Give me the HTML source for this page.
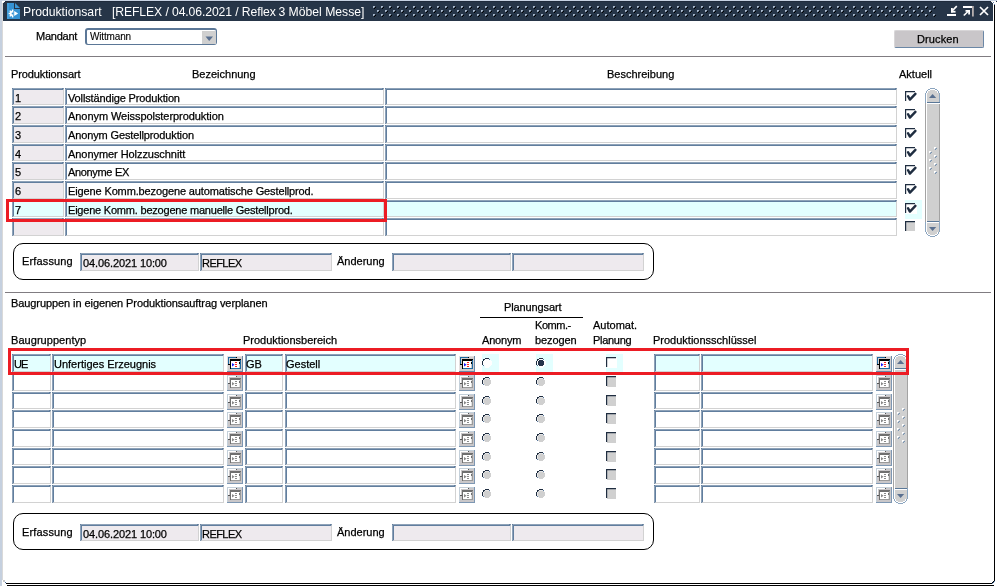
<!DOCTYPE html>
<html><head><meta charset="utf-8"><style>
html,body{margin:0;padding:0;}
body{width:997px;height:586px;position:relative;overflow:hidden;background:#fff;font-family:"Liberation Sans", sans-serif;}
.r{position:absolute;display:block;}
.t{position:absolute;white-space:pre;line-height:13px;font-family:"Liberation Sans", sans-serif;will-change:transform;-webkit-text-stroke:0.25px currentColor;}
.f{position:absolute;box-sizing:border-box;border-top:2px solid #617e9e;border-left:2px solid #617e9e;border-right:1px solid #d2d2d2;border-bottom:1px solid #d2d2d2;}.f::before{content:'';position:absolute;top:-2px;left:-1px;right:1px;height:1px;background:#8ea2b8;}.f::after{content:'';position:absolute;top:-1px;left:-2px;bottom:0;width:1px;background:#8ea2b8;}
.cb{position:absolute;box-sizing:border-box;border:2px solid #5b7797;border-right-width:1px;border-bottom-width:1px;border-radius:3px;background:#fff;}
.btn{position:absolute;box-sizing:border-box;background:#c9c6c9;border-top:1px solid #d8d6d8;border-left:1px solid #d8d6d8;border-right:1px solid #6b87a6;border-bottom:1px solid #6b87a6;border-radius:2px;}
.rb{position:absolute;box-sizing:border-box;border:1px solid #000;border-radius:10px;}
.hl{position:absolute;box-sizing:border-box;border:3px solid #ec1c24;}
</style></head><body>
<div class="r" style="left:0px;top:0px;width:997px;height:1px;background:#c8d3e3"></div>
<div class="r" style="left:0px;top:0px;width:2px;height:586px;background:#c5d0df"></div>
<div class="r" style="left:2px;top:3px;width:1px;height:577px;background:#d9d9d9"></div>
<div class="r" style="left:3px;top:1px;width:990px;height:20px;background:#263548"></div>
<div class="r" style="left:2px;top:1px;width:1px;height:2px;background:#ffffff"></div>
<div class="r" style="left:3px;top:1px;width:2px;height:1px;background:#ffffff"></div>
<div class="r" style="left:3px;top:2px;width:1px;height:1px;background:#e8e8e8"></div>
<div class="r" style="left:5px;top:1px;width:986px;height:1px;background:#1f2b3c"></div>
<div class="r" style="left:991px;top:1px;width:2px;height:1px;background:#f0f0f0"></div>
<div class="r" style="left:992px;top:2px;width:1px;height:1px;background:#ffffff"></div>
<div class="r" style="left:993px;top:2px;width:1px;height:1px;background:#5f7fa8"></div>
<div class="r" style="left:996px;top:1px;width:1px;height:1px;background:#1f2b3c"></div>
<div class="r" style="left:994px;top:5px;width:1px;height:576px;background:#000"></div>
<div class="r" style="left:994px;top:4px;width:1px;height:1px;background:#6688b0"></div>
<div class="r" style="left:6px;top:583px;width:986px;height:1px;background:#000"></div>
<div class="r" style="left:993px;top:581px;width:1px;height:1px;background:#000"></div>
<div class="r" style="left:992px;top:582px;width:1px;height:1px;background:#000"></div>
<div class="r" style="left:994px;top:581px;width:1px;height:1px;background:#6f93bf"></div>
<div class="r" style="left:992px;top:583px;width:1px;height:1px;background:#6f93bf"></div>
<div class="r" style="left:993px;top:582px;width:1px;height:1px;background:#3a5a80"></div>
<div class="r" style="left:7px;top:585px;width:987px;height:1px;background:#000"></div>
<div class="r" style="left:5px;top:582px;width:1px;height:1px;background:#3f6aa0"></div>
<div class="r" style="left:3px;top:580px;width:2px;height:2px;background:#c8c8c8"></div>
<svg class="r" style="left:7px;top:3px" width="13" height="16" viewBox="0 0 13 16">
<path d="M0 0H7V6H13V16H0Z" fill="#3592d3"/>
<rect x="0" y="0" width="2" height="16" fill="#43a0de"/>
<path d="M8 0L13 5H8Z" fill="#3b97d6"/>
<path d="M6.3 7.7H5.6A2.8 2.8 0 0 0 5.6 13.3H6.3Z" fill="#fff"/>
<rect x="4.85" y="6.55" width="1.5" height="1.5" fill="#fff"/><rect x="2.59" y="7.49" width="1.5" height="1.5" fill="#fff"/><rect x="1.65" y="9.75" width="1.5" height="1.5" fill="#fff"/><rect x="2.59" y="12.01" width="1.5" height="1.5" fill="#fff"/><rect x="4.85" y="12.95" width="1.5" height="1.5" fill="#fff"/>
<circle cx="5.5" cy="10.5" r="0.9" fill="#3592d3"/>
<path d="M7.2 8L11.2 10.5L7.2 13Z" fill="#fff"/>
</svg>
<div class="t" style="left:23px;top:6px;font-size:12.2px;color:#fff;-webkit-text-stroke:0;">Produktionsart</div>
<div class="t" style="left:112px;top:6px;font-size:12.2px;color:#fff;-webkit-text-stroke:0;letter-spacing:-0.1px">[REFLEX / 04.06.2021 / Reflex</div>
<div class="t" style="left:275px;top:6px;font-size:12.2px;color:#fff;-webkit-text-stroke:0;"> 3 Möbel Messe]</div>
<svg class="r" style="left:0;top:0" width="997" height="22" viewBox="0 0 997 22" shape-rendering="crispEdges"><path d="M373 6h2v1h-1v1h-1z M373 14h2v1h-1v1h-1z M377 10h2v1h-1v1h-1z M381 6h2v1h-1v1h-1z M381 14h2v1h-1v1h-1z M385 10h2v1h-1v1h-1z M389 6h2v1h-1v1h-1z M389 14h2v1h-1v1h-1z M393 10h2v1h-1v1h-1z M397 6h2v1h-1v1h-1z M397 14h2v1h-1v1h-1z M401 10h2v1h-1v1h-1z M405 6h2v1h-1v1h-1z M405 14h2v1h-1v1h-1z M409 10h2v1h-1v1h-1z M413 6h2v1h-1v1h-1z M413 14h2v1h-1v1h-1z M417 10h2v1h-1v1h-1z M421 6h2v1h-1v1h-1z M421 14h2v1h-1v1h-1z M425 10h2v1h-1v1h-1z M429 6h2v1h-1v1h-1z M429 14h2v1h-1v1h-1z M433 10h2v1h-1v1h-1z M437 6h2v1h-1v1h-1z M437 14h2v1h-1v1h-1z M441 10h2v1h-1v1h-1z M445 6h2v1h-1v1h-1z M445 14h2v1h-1v1h-1z M449 10h2v1h-1v1h-1z M453 6h2v1h-1v1h-1z M453 14h2v1h-1v1h-1z M457 10h2v1h-1v1h-1z M461 6h2v1h-1v1h-1z M461 14h2v1h-1v1h-1z M465 10h2v1h-1v1h-1z M469 6h2v1h-1v1h-1z M469 14h2v1h-1v1h-1z M473 10h2v1h-1v1h-1z M477 6h2v1h-1v1h-1z M477 14h2v1h-1v1h-1z M481 10h2v1h-1v1h-1z M485 6h2v1h-1v1h-1z M485 14h2v1h-1v1h-1z M489 10h2v1h-1v1h-1z M493 6h2v1h-1v1h-1z M493 14h2v1h-1v1h-1z M497 10h2v1h-1v1h-1z M501 6h2v1h-1v1h-1z M501 14h2v1h-1v1h-1z M505 10h2v1h-1v1h-1z M509 6h2v1h-1v1h-1z M509 14h2v1h-1v1h-1z M513 10h2v1h-1v1h-1z M517 6h2v1h-1v1h-1z M517 14h2v1h-1v1h-1z M521 10h2v1h-1v1h-1z M525 6h2v1h-1v1h-1z M525 14h2v1h-1v1h-1z M529 10h2v1h-1v1h-1z M533 6h2v1h-1v1h-1z M533 14h2v1h-1v1h-1z M537 10h2v1h-1v1h-1z M541 6h2v1h-1v1h-1z M541 14h2v1h-1v1h-1z M545 10h2v1h-1v1h-1z M549 6h2v1h-1v1h-1z M549 14h2v1h-1v1h-1z M553 10h2v1h-1v1h-1z M557 6h2v1h-1v1h-1z M557 14h2v1h-1v1h-1z M561 10h2v1h-1v1h-1z M565 6h2v1h-1v1h-1z M565 14h2v1h-1v1h-1z M569 10h2v1h-1v1h-1z M573 6h2v1h-1v1h-1z M573 14h2v1h-1v1h-1z M577 10h2v1h-1v1h-1z M581 6h2v1h-1v1h-1z M581 14h2v1h-1v1h-1z M585 10h2v1h-1v1h-1z M589 6h2v1h-1v1h-1z M589 14h2v1h-1v1h-1z M593 10h2v1h-1v1h-1z M597 6h2v1h-1v1h-1z M597 14h2v1h-1v1h-1z M601 10h2v1h-1v1h-1z M605 6h2v1h-1v1h-1z M605 14h2v1h-1v1h-1z M609 10h2v1h-1v1h-1z M613 6h2v1h-1v1h-1z M613 14h2v1h-1v1h-1z M617 10h2v1h-1v1h-1z M621 6h2v1h-1v1h-1z M621 14h2v1h-1v1h-1z M625 10h2v1h-1v1h-1z M629 6h2v1h-1v1h-1z M629 14h2v1h-1v1h-1z M633 10h2v1h-1v1h-1z M637 6h2v1h-1v1h-1z M637 14h2v1h-1v1h-1z M641 10h2v1h-1v1h-1z M645 6h2v1h-1v1h-1z M645 14h2v1h-1v1h-1z M649 10h2v1h-1v1h-1z M653 6h2v1h-1v1h-1z M653 14h2v1h-1v1h-1z M657 10h2v1h-1v1h-1z M661 6h2v1h-1v1h-1z M661 14h2v1h-1v1h-1z M665 10h2v1h-1v1h-1z M669 6h2v1h-1v1h-1z M669 14h2v1h-1v1h-1z M673 10h2v1h-1v1h-1z M677 6h2v1h-1v1h-1z M677 14h2v1h-1v1h-1z M681 10h2v1h-1v1h-1z M685 6h2v1h-1v1h-1z M685 14h2v1h-1v1h-1z M689 10h2v1h-1v1h-1z M693 6h2v1h-1v1h-1z M693 14h2v1h-1v1h-1z M697 10h2v1h-1v1h-1z M701 6h2v1h-1v1h-1z M701 14h2v1h-1v1h-1z M705 10h2v1h-1v1h-1z M709 6h2v1h-1v1h-1z M709 14h2v1h-1v1h-1z M713 10h2v1h-1v1h-1z M717 6h2v1h-1v1h-1z M717 14h2v1h-1v1h-1z M721 10h2v1h-1v1h-1z M725 6h2v1h-1v1h-1z M725 14h2v1h-1v1h-1z M729 10h2v1h-1v1h-1z M733 6h2v1h-1v1h-1z M733 14h2v1h-1v1h-1z M737 10h2v1h-1v1h-1z M741 6h2v1h-1v1h-1z M741 14h2v1h-1v1h-1z M745 10h2v1h-1v1h-1z M749 6h2v1h-1v1h-1z M749 14h2v1h-1v1h-1z M753 10h2v1h-1v1h-1z M757 6h2v1h-1v1h-1z M757 14h2v1h-1v1h-1z M761 10h2v1h-1v1h-1z M765 6h2v1h-1v1h-1z M765 14h2v1h-1v1h-1z M769 10h2v1h-1v1h-1z M773 6h2v1h-1v1h-1z M773 14h2v1h-1v1h-1z M777 10h2v1h-1v1h-1z M781 6h2v1h-1v1h-1z M781 14h2v1h-1v1h-1z M785 10h2v1h-1v1h-1z M789 6h2v1h-1v1h-1z M789 14h2v1h-1v1h-1z M793 10h2v1h-1v1h-1z M797 6h2v1h-1v1h-1z M797 14h2v1h-1v1h-1z M801 10h2v1h-1v1h-1z M805 6h2v1h-1v1h-1z M805 14h2v1h-1v1h-1z M809 10h2v1h-1v1h-1z M813 6h2v1h-1v1h-1z M813 14h2v1h-1v1h-1z M817 10h2v1h-1v1h-1z M821 6h2v1h-1v1h-1z M821 14h2v1h-1v1h-1z M825 10h2v1h-1v1h-1z M829 6h2v1h-1v1h-1z M829 14h2v1h-1v1h-1z M833 10h2v1h-1v1h-1z M837 6h2v1h-1v1h-1z M837 14h2v1h-1v1h-1z M841 10h2v1h-1v1h-1z M845 6h2v1h-1v1h-1z M845 14h2v1h-1v1h-1z M849 10h2v1h-1v1h-1z M853 6h2v1h-1v1h-1z M853 14h2v1h-1v1h-1z M857 10h2v1h-1v1h-1z M861 6h2v1h-1v1h-1z M861 14h2v1h-1v1h-1z M865 10h2v1h-1v1h-1z M869 6h2v1h-1v1h-1z M869 14h2v1h-1v1h-1z M873 10h2v1h-1v1h-1z M877 6h2v1h-1v1h-1z M877 14h2v1h-1v1h-1z M881 10h2v1h-1v1h-1z M885 6h2v1h-1v1h-1z M885 14h2v1h-1v1h-1z M889 10h2v1h-1v1h-1z M893 6h2v1h-1v1h-1z M893 14h2v1h-1v1h-1z M897 10h2v1h-1v1h-1z M901 6h2v1h-1v1h-1z M901 14h2v1h-1v1h-1z M905 10h2v1h-1v1h-1z M909 6h2v1h-1v1h-1z M909 14h2v1h-1v1h-1z M913 10h2v1h-1v1h-1z M917 6h2v1h-1v1h-1z M917 14h2v1h-1v1h-1z M921 10h2v1h-1v1h-1z M925 6h2v1h-1v1h-1z M925 14h2v1h-1v1h-1z M929 10h2v1h-1v1h-1z M933 6h2v1h-1v1h-1z M933 14h2v1h-1v1h-1z" fill="#a9b8cb"/><path d="M374 7h1v1h-1z M374 15h1v1h-1z M378 11h1v1h-1z M382 7h1v1h-1z M382 15h1v1h-1z M386 11h1v1h-1z M390 7h1v1h-1z M390 15h1v1h-1z M394 11h1v1h-1z M398 7h1v1h-1z M398 15h1v1h-1z M402 11h1v1h-1z M406 7h1v1h-1z M406 15h1v1h-1z M410 11h1v1h-1z M414 7h1v1h-1z M414 15h1v1h-1z M418 11h1v1h-1z M422 7h1v1h-1z M422 15h1v1h-1z M426 11h1v1h-1z M430 7h1v1h-1z M430 15h1v1h-1z M434 11h1v1h-1z M438 7h1v1h-1z M438 15h1v1h-1z M442 11h1v1h-1z M446 7h1v1h-1z M446 15h1v1h-1z M450 11h1v1h-1z M454 7h1v1h-1z M454 15h1v1h-1z M458 11h1v1h-1z M462 7h1v1h-1z M462 15h1v1h-1z M466 11h1v1h-1z M470 7h1v1h-1z M470 15h1v1h-1z M474 11h1v1h-1z M478 7h1v1h-1z M478 15h1v1h-1z M482 11h1v1h-1z M486 7h1v1h-1z M486 15h1v1h-1z M490 11h1v1h-1z M494 7h1v1h-1z M494 15h1v1h-1z M498 11h1v1h-1z M502 7h1v1h-1z M502 15h1v1h-1z M506 11h1v1h-1z M510 7h1v1h-1z M510 15h1v1h-1z M514 11h1v1h-1z M518 7h1v1h-1z M518 15h1v1h-1z M522 11h1v1h-1z M526 7h1v1h-1z M526 15h1v1h-1z M530 11h1v1h-1z M534 7h1v1h-1z M534 15h1v1h-1z M538 11h1v1h-1z M542 7h1v1h-1z M542 15h1v1h-1z M546 11h1v1h-1z M550 7h1v1h-1z M550 15h1v1h-1z M554 11h1v1h-1z M558 7h1v1h-1z M558 15h1v1h-1z M562 11h1v1h-1z M566 7h1v1h-1z M566 15h1v1h-1z M570 11h1v1h-1z M574 7h1v1h-1z M574 15h1v1h-1z M578 11h1v1h-1z M582 7h1v1h-1z M582 15h1v1h-1z M586 11h1v1h-1z M590 7h1v1h-1z M590 15h1v1h-1z M594 11h1v1h-1z M598 7h1v1h-1z M598 15h1v1h-1z M602 11h1v1h-1z M606 7h1v1h-1z M606 15h1v1h-1z M610 11h1v1h-1z M614 7h1v1h-1z M614 15h1v1h-1z M618 11h1v1h-1z M622 7h1v1h-1z M622 15h1v1h-1z M626 11h1v1h-1z M630 7h1v1h-1z M630 15h1v1h-1z M634 11h1v1h-1z M638 7h1v1h-1z M638 15h1v1h-1z M642 11h1v1h-1z M646 7h1v1h-1z M646 15h1v1h-1z M650 11h1v1h-1z M654 7h1v1h-1z M654 15h1v1h-1z M658 11h1v1h-1z M662 7h1v1h-1z M662 15h1v1h-1z M666 11h1v1h-1z M670 7h1v1h-1z M670 15h1v1h-1z M674 11h1v1h-1z M678 7h1v1h-1z M678 15h1v1h-1z M682 11h1v1h-1z M686 7h1v1h-1z M686 15h1v1h-1z M690 11h1v1h-1z M694 7h1v1h-1z M694 15h1v1h-1z M698 11h1v1h-1z M702 7h1v1h-1z M702 15h1v1h-1z M706 11h1v1h-1z M710 7h1v1h-1z M710 15h1v1h-1z M714 11h1v1h-1z M718 7h1v1h-1z M718 15h1v1h-1z M722 11h1v1h-1z M726 7h1v1h-1z M726 15h1v1h-1z M730 11h1v1h-1z M734 7h1v1h-1z M734 15h1v1h-1z M738 11h1v1h-1z M742 7h1v1h-1z M742 15h1v1h-1z M746 11h1v1h-1z M750 7h1v1h-1z M750 15h1v1h-1z M754 11h1v1h-1z M758 7h1v1h-1z M758 15h1v1h-1z M762 11h1v1h-1z M766 7h1v1h-1z M766 15h1v1h-1z M770 11h1v1h-1z M774 7h1v1h-1z M774 15h1v1h-1z M778 11h1v1h-1z M782 7h1v1h-1z M782 15h1v1h-1z M786 11h1v1h-1z M790 7h1v1h-1z M790 15h1v1h-1z M794 11h1v1h-1z M798 7h1v1h-1z M798 15h1v1h-1z M802 11h1v1h-1z M806 7h1v1h-1z M806 15h1v1h-1z M810 11h1v1h-1z M814 7h1v1h-1z M814 15h1v1h-1z M818 11h1v1h-1z M822 7h1v1h-1z M822 15h1v1h-1z M826 11h1v1h-1z M830 7h1v1h-1z M830 15h1v1h-1z M834 11h1v1h-1z M838 7h1v1h-1z M838 15h1v1h-1z M842 11h1v1h-1z M846 7h1v1h-1z M846 15h1v1h-1z M850 11h1v1h-1z M854 7h1v1h-1z M854 15h1v1h-1z M858 11h1v1h-1z M862 7h1v1h-1z M862 15h1v1h-1z M866 11h1v1h-1z M870 7h1v1h-1z M870 15h1v1h-1z M874 11h1v1h-1z M878 7h1v1h-1z M878 15h1v1h-1z M882 11h1v1h-1z M886 7h1v1h-1z M886 15h1v1h-1z M890 11h1v1h-1z M894 7h1v1h-1z M894 15h1v1h-1z M898 11h1v1h-1z M902 7h1v1h-1z M902 15h1v1h-1z M906 11h1v1h-1z M910 7h1v1h-1z M910 15h1v1h-1z M914 11h1v1h-1z M918 7h1v1h-1z M918 15h1v1h-1z M922 11h1v1h-1z M926 7h1v1h-1z M926 15h1v1h-1z M930 11h1v1h-1z M934 7h1v1h-1z M934 15h1v1h-1z" fill="#4a5a70"/><path d="M375 7h1v1h-1z M374 8h1v1h-1z M375 15h1v1h-1z M374 16h1v1h-1z M379 11h1v1h-1z M378 12h1v1h-1z M383 7h1v1h-1z M382 8h1v1h-1z M383 15h1v1h-1z M382 16h1v1h-1z M387 11h1v1h-1z M386 12h1v1h-1z M391 7h1v1h-1z M390 8h1v1h-1z M391 15h1v1h-1z M390 16h1v1h-1z M395 11h1v1h-1z M394 12h1v1h-1z M399 7h1v1h-1z M398 8h1v1h-1z M399 15h1v1h-1z M398 16h1v1h-1z M403 11h1v1h-1z M402 12h1v1h-1z M407 7h1v1h-1z M406 8h1v1h-1z M407 15h1v1h-1z M406 16h1v1h-1z M411 11h1v1h-1z M410 12h1v1h-1z M415 7h1v1h-1z M414 8h1v1h-1z M415 15h1v1h-1z M414 16h1v1h-1z M419 11h1v1h-1z M418 12h1v1h-1z M423 7h1v1h-1z M422 8h1v1h-1z M423 15h1v1h-1z M422 16h1v1h-1z M427 11h1v1h-1z M426 12h1v1h-1z M431 7h1v1h-1z M430 8h1v1h-1z M431 15h1v1h-1z M430 16h1v1h-1z M435 11h1v1h-1z M434 12h1v1h-1z M439 7h1v1h-1z M438 8h1v1h-1z M439 15h1v1h-1z M438 16h1v1h-1z M443 11h1v1h-1z M442 12h1v1h-1z M447 7h1v1h-1z M446 8h1v1h-1z M447 15h1v1h-1z M446 16h1v1h-1z M451 11h1v1h-1z M450 12h1v1h-1z M455 7h1v1h-1z M454 8h1v1h-1z M455 15h1v1h-1z M454 16h1v1h-1z M459 11h1v1h-1z M458 12h1v1h-1z M463 7h1v1h-1z M462 8h1v1h-1z M463 15h1v1h-1z M462 16h1v1h-1z M467 11h1v1h-1z M466 12h1v1h-1z M471 7h1v1h-1z M470 8h1v1h-1z M471 15h1v1h-1z M470 16h1v1h-1z M475 11h1v1h-1z M474 12h1v1h-1z M479 7h1v1h-1z M478 8h1v1h-1z M479 15h1v1h-1z M478 16h1v1h-1z M483 11h1v1h-1z M482 12h1v1h-1z M487 7h1v1h-1z M486 8h1v1h-1z M487 15h1v1h-1z M486 16h1v1h-1z M491 11h1v1h-1z M490 12h1v1h-1z M495 7h1v1h-1z M494 8h1v1h-1z M495 15h1v1h-1z M494 16h1v1h-1z M499 11h1v1h-1z M498 12h1v1h-1z M503 7h1v1h-1z M502 8h1v1h-1z M503 15h1v1h-1z M502 16h1v1h-1z M507 11h1v1h-1z M506 12h1v1h-1z M511 7h1v1h-1z M510 8h1v1h-1z M511 15h1v1h-1z M510 16h1v1h-1z M515 11h1v1h-1z M514 12h1v1h-1z M519 7h1v1h-1z M518 8h1v1h-1z M519 15h1v1h-1z M518 16h1v1h-1z M523 11h1v1h-1z M522 12h1v1h-1z M527 7h1v1h-1z M526 8h1v1h-1z M527 15h1v1h-1z M526 16h1v1h-1z M531 11h1v1h-1z M530 12h1v1h-1z M535 7h1v1h-1z M534 8h1v1h-1z M535 15h1v1h-1z M534 16h1v1h-1z M539 11h1v1h-1z M538 12h1v1h-1z M543 7h1v1h-1z M542 8h1v1h-1z M543 15h1v1h-1z M542 16h1v1h-1z M547 11h1v1h-1z M546 12h1v1h-1z M551 7h1v1h-1z M550 8h1v1h-1z M551 15h1v1h-1z M550 16h1v1h-1z M555 11h1v1h-1z M554 12h1v1h-1z M559 7h1v1h-1z M558 8h1v1h-1z M559 15h1v1h-1z M558 16h1v1h-1z M563 11h1v1h-1z M562 12h1v1h-1z M567 7h1v1h-1z M566 8h1v1h-1z M567 15h1v1h-1z M566 16h1v1h-1z M571 11h1v1h-1z M570 12h1v1h-1z M575 7h1v1h-1z M574 8h1v1h-1z M575 15h1v1h-1z M574 16h1v1h-1z M579 11h1v1h-1z M578 12h1v1h-1z M583 7h1v1h-1z M582 8h1v1h-1z M583 15h1v1h-1z M582 16h1v1h-1z M587 11h1v1h-1z M586 12h1v1h-1z M591 7h1v1h-1z M590 8h1v1h-1z M591 15h1v1h-1z M590 16h1v1h-1z M595 11h1v1h-1z M594 12h1v1h-1z M599 7h1v1h-1z M598 8h1v1h-1z M599 15h1v1h-1z M598 16h1v1h-1z M603 11h1v1h-1z M602 12h1v1h-1z M607 7h1v1h-1z M606 8h1v1h-1z M607 15h1v1h-1z M606 16h1v1h-1z M611 11h1v1h-1z M610 12h1v1h-1z M615 7h1v1h-1z M614 8h1v1h-1z M615 15h1v1h-1z M614 16h1v1h-1z M619 11h1v1h-1z M618 12h1v1h-1z M623 7h1v1h-1z M622 8h1v1h-1z M623 15h1v1h-1z M622 16h1v1h-1z M627 11h1v1h-1z M626 12h1v1h-1z M631 7h1v1h-1z M630 8h1v1h-1z M631 15h1v1h-1z M630 16h1v1h-1z M635 11h1v1h-1z M634 12h1v1h-1z M639 7h1v1h-1z M638 8h1v1h-1z M639 15h1v1h-1z M638 16h1v1h-1z M643 11h1v1h-1z M642 12h1v1h-1z M647 7h1v1h-1z M646 8h1v1h-1z M647 15h1v1h-1z M646 16h1v1h-1z M651 11h1v1h-1z M650 12h1v1h-1z M655 7h1v1h-1z M654 8h1v1h-1z M655 15h1v1h-1z M654 16h1v1h-1z M659 11h1v1h-1z M658 12h1v1h-1z M663 7h1v1h-1z M662 8h1v1h-1z M663 15h1v1h-1z M662 16h1v1h-1z M667 11h1v1h-1z M666 12h1v1h-1z M671 7h1v1h-1z M670 8h1v1h-1z M671 15h1v1h-1z M670 16h1v1h-1z M675 11h1v1h-1z M674 12h1v1h-1z M679 7h1v1h-1z M678 8h1v1h-1z M679 15h1v1h-1z M678 16h1v1h-1z M683 11h1v1h-1z M682 12h1v1h-1z M687 7h1v1h-1z M686 8h1v1h-1z M687 15h1v1h-1z M686 16h1v1h-1z M691 11h1v1h-1z M690 12h1v1h-1z M695 7h1v1h-1z M694 8h1v1h-1z M695 15h1v1h-1z M694 16h1v1h-1z M699 11h1v1h-1z M698 12h1v1h-1z M703 7h1v1h-1z M702 8h1v1h-1z M703 15h1v1h-1z M702 16h1v1h-1z M707 11h1v1h-1z M706 12h1v1h-1z M711 7h1v1h-1z M710 8h1v1h-1z M711 15h1v1h-1z M710 16h1v1h-1z M715 11h1v1h-1z M714 12h1v1h-1z M719 7h1v1h-1z M718 8h1v1h-1z M719 15h1v1h-1z M718 16h1v1h-1z M723 11h1v1h-1z M722 12h1v1h-1z M727 7h1v1h-1z M726 8h1v1h-1z M727 15h1v1h-1z M726 16h1v1h-1z M731 11h1v1h-1z M730 12h1v1h-1z M735 7h1v1h-1z M734 8h1v1h-1z M735 15h1v1h-1z M734 16h1v1h-1z M739 11h1v1h-1z M738 12h1v1h-1z M743 7h1v1h-1z M742 8h1v1h-1z M743 15h1v1h-1z M742 16h1v1h-1z M747 11h1v1h-1z M746 12h1v1h-1z M751 7h1v1h-1z M750 8h1v1h-1z M751 15h1v1h-1z M750 16h1v1h-1z M755 11h1v1h-1z M754 12h1v1h-1z M759 7h1v1h-1z M758 8h1v1h-1z M759 15h1v1h-1z M758 16h1v1h-1z M763 11h1v1h-1z M762 12h1v1h-1z M767 7h1v1h-1z M766 8h1v1h-1z M767 15h1v1h-1z M766 16h1v1h-1z M771 11h1v1h-1z M770 12h1v1h-1z M775 7h1v1h-1z M774 8h1v1h-1z M775 15h1v1h-1z M774 16h1v1h-1z M779 11h1v1h-1z M778 12h1v1h-1z M783 7h1v1h-1z M782 8h1v1h-1z M783 15h1v1h-1z M782 16h1v1h-1z M787 11h1v1h-1z M786 12h1v1h-1z M791 7h1v1h-1z M790 8h1v1h-1z M791 15h1v1h-1z M790 16h1v1h-1z M795 11h1v1h-1z M794 12h1v1h-1z M799 7h1v1h-1z M798 8h1v1h-1z M799 15h1v1h-1z M798 16h1v1h-1z M803 11h1v1h-1z M802 12h1v1h-1z M807 7h1v1h-1z M806 8h1v1h-1z M807 15h1v1h-1z M806 16h1v1h-1z M811 11h1v1h-1z M810 12h1v1h-1z M815 7h1v1h-1z M814 8h1v1h-1z M815 15h1v1h-1z M814 16h1v1h-1z M819 11h1v1h-1z M818 12h1v1h-1z M823 7h1v1h-1z M822 8h1v1h-1z M823 15h1v1h-1z M822 16h1v1h-1z M827 11h1v1h-1z M826 12h1v1h-1z M831 7h1v1h-1z M830 8h1v1h-1z M831 15h1v1h-1z M830 16h1v1h-1z M835 11h1v1h-1z M834 12h1v1h-1z M839 7h1v1h-1z M838 8h1v1h-1z M839 15h1v1h-1z M838 16h1v1h-1z M843 11h1v1h-1z M842 12h1v1h-1z M847 7h1v1h-1z M846 8h1v1h-1z M847 15h1v1h-1z M846 16h1v1h-1z M851 11h1v1h-1z M850 12h1v1h-1z M855 7h1v1h-1z M854 8h1v1h-1z M855 15h1v1h-1z M854 16h1v1h-1z M859 11h1v1h-1z M858 12h1v1h-1z M863 7h1v1h-1z M862 8h1v1h-1z M863 15h1v1h-1z M862 16h1v1h-1z M867 11h1v1h-1z M866 12h1v1h-1z M871 7h1v1h-1z M870 8h1v1h-1z M871 15h1v1h-1z M870 16h1v1h-1z M875 11h1v1h-1z M874 12h1v1h-1z M879 7h1v1h-1z M878 8h1v1h-1z M879 15h1v1h-1z M878 16h1v1h-1z M883 11h1v1h-1z M882 12h1v1h-1z M887 7h1v1h-1z M886 8h1v1h-1z M887 15h1v1h-1z M886 16h1v1h-1z M891 11h1v1h-1z M890 12h1v1h-1z M895 7h1v1h-1z M894 8h1v1h-1z M895 15h1v1h-1z M894 16h1v1h-1z M899 11h1v1h-1z M898 12h1v1h-1z M903 7h1v1h-1z M902 8h1v1h-1z M903 15h1v1h-1z M902 16h1v1h-1z M907 11h1v1h-1z M906 12h1v1h-1z M911 7h1v1h-1z M910 8h1v1h-1z M911 15h1v1h-1z M910 16h1v1h-1z M915 11h1v1h-1z M914 12h1v1h-1z M919 7h1v1h-1z M918 8h1v1h-1z M919 15h1v1h-1z M918 16h1v1h-1z M923 11h1v1h-1z M922 12h1v1h-1z M927 7h1v1h-1z M926 8h1v1h-1z M927 15h1v1h-1z M926 16h1v1h-1z M931 11h1v1h-1z M930 12h1v1h-1z M935 7h1v1h-1z M934 8h1v1h-1z M935 15h1v1h-1z M934 16h1v1h-1z" fill="#000"/></svg>
<svg class="r" style="left:944px;top:3px" width="50" height="16" viewBox="0 0 50 16">
<g fill="#fff">
<rect x="3" y="11" width="9" height="2"/>
<rect x="7" y="5" width="1.8" height="4.5"/>
<rect x="7" y="7.8" width="4.5" height="1.8"/>
<rect x="19" y="3" width="10" height="2"/>
<rect x="28" y="3" width="1.8" height="10.5" fill="#b5aeae"/>
<rect x="21.5" y="7" width="4" height="1.8"/>
<rect x="24.2" y="7" width="1.8" height="4.5"/>
</g>
<g stroke="#fff" stroke-width="1.7" fill="none">
<path d="M12.8 3.2L8 8"/>
<path d="M19.8 12.5L25 7.5"/>
<path d="M36 4L44 12M44 4L36 12"/>
</g></svg>
<div class="t" style="left:36px;top:30px;font-size:11px;color:#000;letter-spacing:-0.25px">Mandant</div>
<div class="cb" style="left:85px;top:28px;width:132px;height:17px"></div>
<div class="t" style="left:90px;top:30px;font-size:10px;color:#000;-webkit-text-stroke:0.1px currentColor;letter-spacing:-0.15px">Wittmann</div>
<div class="r" style="left:202px;top:31px;width:14px;height:13px;background:#d0d0d0"></div>
<svg class="r" style="left:205px;top:36px" width="9" height="6"><path d="M0.5 0.5H8L4.2 5Z" fill="#5a7090"/></svg>
<div class="btn" style="left:894px;top:30px;width:90px;height:18px"></div>
<div class="t" style="left:917px;top:33px;font-size:11px;color:#000;letter-spacing:0.12px">Drucken</div>
<div class="r" style="left:5px;top:56px;width:986px;height:1px;background:#807c81"></div>
<div class="t" style="left:11px;top:68px;font-size:11px;color:#000;letter-spacing:-0.1px">Produktionsart</div>
<div class="t" style="left:192px;top:68px;font-size:11px;color:#000;">Bezeichnung</div>
<div class="t" style="left:607px;top:68px;font-size:11px;color:#000;">Beschreibung</div>
<div class="t" style="left:899px;top:68px;font-size:11px;color:#000;">Aktuell</div>
<div class="f" style="left:12px;top:88px;width:52px;height:17px;background:#eeeaee"></div>
<div class="f" style="left:65px;top:88px;width:319px;height:17px;background:#fff"></div>
<div class="f" style="left:385px;top:88px;width:512px;height:17px;background:#fff"></div>
<div class="t" style="left:15px;top:92px;font-size:11px;color:#000;">1</div>
<div class="t" style="left:68px;top:92px;font-size:11px;color:#000;letter-spacing:-0.136px">Vollständige Produktion</div>
<svg class="r" style="left:905px;top:91px" width="12" height="11" viewBox="0 0 12 11"><path d="M0.6 10V0.6H10" fill="none" stroke="#1f2d40" stroke-width="1.2"/><path d="M3 5.2L4.9 8.6L10.4 2.8" fill="none" stroke="#1f2d40" stroke-width="2.4" stroke-linecap="round" stroke-linejoin="round"/></svg>
<div class="f" style="left:12px;top:106px;width:52px;height:18px;background:#eeeaee"></div>
<div class="f" style="left:65px;top:106px;width:319px;height:18px;background:#fff"></div>
<div class="f" style="left:385px;top:106px;width:512px;height:18px;background:#fff"></div>
<div class="t" style="left:15px;top:110px;font-size:11px;color:#000;">2</div>
<div class="t" style="left:68px;top:110px;font-size:11px;color:#000;letter-spacing:-0.06px">Anonym Weisspolsterproduktion</div>
<svg class="r" style="left:905px;top:109px" width="12" height="11" viewBox="0 0 12 11"><path d="M0.6 10V0.6H10" fill="none" stroke="#1f2d40" stroke-width="1.2"/><path d="M3 5.2L4.9 8.6L10.4 2.8" fill="none" stroke="#1f2d40" stroke-width="2.4" stroke-linecap="round" stroke-linejoin="round"/></svg>
<div class="f" style="left:12px;top:125px;width:52px;height:18px;background:#eeeaee"></div>
<div class="f" style="left:65px;top:125px;width:319px;height:18px;background:#fff"></div>
<div class="f" style="left:385px;top:125px;width:512px;height:18px;background:#fff"></div>
<div class="t" style="left:15px;top:129px;font-size:11px;color:#000;">3</div>
<div class="t" style="left:68px;top:129px;font-size:11px;color:#000;letter-spacing:-0.13px">Anonym Gestellproduktion</div>
<svg class="r" style="left:905px;top:128px" width="12" height="11" viewBox="0 0 12 11"><path d="M0.6 10V0.6H10" fill="none" stroke="#1f2d40" stroke-width="1.2"/><path d="M3 5.2L4.9 8.6L10.4 2.8" fill="none" stroke="#1f2d40" stroke-width="2.4" stroke-linecap="round" stroke-linejoin="round"/></svg>
<div class="f" style="left:12px;top:144px;width:52px;height:17px;background:#eeeaee"></div>
<div class="f" style="left:65px;top:144px;width:319px;height:17px;background:#fff"></div>
<div class="f" style="left:385px;top:144px;width:512px;height:17px;background:#fff"></div>
<div class="t" style="left:15px;top:148px;font-size:11px;color:#000;">4</div>
<div class="t" style="left:68px;top:148px;font-size:11px;color:#000;letter-spacing:-0.06px">Anonymer Holzzuschnitt</div>
<svg class="r" style="left:905px;top:147px" width="12" height="11" viewBox="0 0 12 11"><path d="M0.6 10V0.6H10" fill="none" stroke="#1f2d40" stroke-width="1.2"/><path d="M3 5.2L4.9 8.6L10.4 2.8" fill="none" stroke="#1f2d40" stroke-width="2.4" stroke-linecap="round" stroke-linejoin="round"/></svg>
<div class="f" style="left:12px;top:162px;width:52px;height:18px;background:#eeeaee"></div>
<div class="f" style="left:65px;top:162px;width:319px;height:18px;background:#fff"></div>
<div class="f" style="left:385px;top:162px;width:512px;height:18px;background:#fff"></div>
<div class="t" style="left:15px;top:166px;font-size:11px;color:#000;">5</div>
<div class="t" style="left:68px;top:166px;font-size:11px;color:#000;letter-spacing:-0.33px">Anonyme EX</div>
<svg class="r" style="left:905px;top:165px" width="12" height="11" viewBox="0 0 12 11"><path d="M0.6 10V0.6H10" fill="none" stroke="#1f2d40" stroke-width="1.2"/><path d="M3 5.2L4.9 8.6L10.4 2.8" fill="none" stroke="#1f2d40" stroke-width="2.4" stroke-linecap="round" stroke-linejoin="round"/></svg>
<div class="f" style="left:12px;top:181px;width:52px;height:18px;background:#eeeaee"></div>
<div class="f" style="left:65px;top:181px;width:319px;height:18px;background:#fff"></div>
<div class="f" style="left:385px;top:181px;width:512px;height:18px;background:#fff"></div>
<div class="t" style="left:15px;top:185px;font-size:11px;color:#000;">6</div>
<div class="t" style="left:68px;top:185px;font-size:11px;color:#000;letter-spacing:-0.127px">Eigene Komm.bezogene automatische Gestellprod.</div>
<svg class="r" style="left:905px;top:184px" width="12" height="11" viewBox="0 0 12 11"><path d="M0.6 10V0.6H10" fill="none" stroke="#1f2d40" stroke-width="1.2"/><path d="M3 5.2L4.9 8.6L10.4 2.8" fill="none" stroke="#1f2d40" stroke-width="2.4" stroke-linecap="round" stroke-linejoin="round"/></svg>
<div class="f" style="left:12px;top:200px;width:52px;height:17px;background:#e3ffff"></div>
<div class="f" style="left:65px;top:200px;width:319px;height:17px;background:#e3ffff"></div>
<div class="f" style="left:385px;top:200px;width:512px;height:17px;background:#e3ffff"></div>
<div class="t" style="left:15px;top:204px;font-size:11px;color:#000;">7</div>
<div class="t" style="left:68px;top:204px;font-size:11px;color:#000;letter-spacing:-0.21px">Eigene Komm. bezogene manuelle Gestellprod.</div>
<div class="r" style="left:905px;top:200px;width:17px;height:19px;background:#e3ffff"></div>
<div class="r" style="left:906px;top:204px;width:11px;height:10px;background:#fff"></div>
<svg class="r" style="left:905px;top:203px" width="12" height="11" viewBox="0 0 12 11"><path d="M0.6 10V0.6H10" fill="none" stroke="#1f2d40" stroke-width="1.2"/><path d="M3 5.2L4.9 8.6L10.4 2.8" fill="none" stroke="#1f2d40" stroke-width="2.4" stroke-linecap="round" stroke-linejoin="round"/></svg>
<div class="f" style="left:12px;top:218px;width:52px;height:18px;background:#eeeaee"></div>
<div class="f" style="left:65px;top:218px;width:319px;height:18px;background:#fff"></div>
<div class="f" style="left:385px;top:218px;width:512px;height:18px;background:#fff"></div>
<div class="r" style="left:906px;top:222px;width:9px;height:9px;background:#d0d0d0"></div>
<svg class="r" style="left:905px;top:221px" width="12" height="11" viewBox="0 0 12 11"><path d="M0.6 10V0.6H10" fill="none" stroke="#1f2d40" stroke-width="1.2"/></svg>
<svg class="r" style="left:925px;top:88px" width="15" height="149" viewBox="0 0 15 149"><g shape-rendering="crispEdges"><rect x="5" y="2" width="5" height="1" fill="#d0d0d0"/><rect x="3" y="3" width="9" height="1" fill="#d0d0d0"/><rect x="3" y="4" width="9" height="1" fill="#d0d0d0"/><rect x="2" y="5" width="12" height="9" fill="#d0d0d0"/><rect x="5" y="0" width="5" height="1" fill="#8ca5bf"/><rect x="3" y="1" width="2" height="1" fill="#8ca5bf"/><rect x="10" y="1" width="2" height="1" fill="#8ca5bf"/><rect x="2" y="2" width="1" height="1" fill="#8ca5bf"/><rect x="12" y="2" width="1" height="1" fill="#8ca5bf"/><rect x="1" y="3" width="1" height="1" fill="#8ca5bf"/><rect x="13" y="3" width="1" height="1" fill="#8ca5bf"/><rect x="1" y="4" width="1" height="1" fill="#8ca5bf"/><rect x="13" y="4" width="1" height="1" fill="#8ca5bf"/><rect x="5" y="1" width="5" height="1" fill="#fff"/><rect x="3" y="2" width="2" height="1" fill="#fff"/><rect x="10" y="2" width="2" height="1" fill="#fff"/><rect x="2" y="3" width="1" height="1" fill="#fff"/><rect x="12" y="3" width="1" height="1" fill="#fff"/><rect x="2" y="4" width="1" height="1" fill="#fff"/><rect x="12" y="4" width="1" height="1" fill="#fff"/><rect x="0" y="5" width="1" height="10" fill="#8ca5bf"/><rect x="14" y="5" width="1" height="10" fill="#8ca5bf"/><rect x="1" y="5" width="1" height="9" fill="#fff"/><rect x="2" y="14" width="13" height="1" fill="#5a7898"/><rect x="2" y="15" width="12" height="1" fill="#fff"/><rect x="0" y="15" width="1" height="119" fill="#a3a3a3"/><rect x="14" y="16" width="1" height="118" fill="#a3a3a3"/><rect x="1" y="15" width="1" height="119" fill="#fff"/><rect x="2" y="16" width="12" height="118" fill="#d0d0d0"/><rect x="2" y="133" width="13" height="1" fill="#5a7898"/><rect x="2" y="134" width="12" height="1" fill="#fff"/><rect x="2" y="135" width="12" height="9" fill="#d0d0d0"/><rect x="0" y="134" width="1" height="10" fill="#8ca5bf"/><rect x="14" y="133" width="1" height="11" fill="#8ca5bf"/><rect x="1" y="135" width="1" height="9" fill="#fff"/><rect x="5" y="146" width="5" height="1" fill="#d0d0d0"/><rect x="3" y="145" width="9" height="1" fill="#d0d0d0"/><rect x="3" y="144" width="9" height="1" fill="#d0d0d0"/><rect x="5" y="148" width="5" height="1" fill="#8ca5bf"/><rect x="3" y="147" width="2" height="1" fill="#8ca5bf"/><rect x="10" y="147" width="2" height="1" fill="#8ca5bf"/><rect x="2" y="146" width="1" height="1" fill="#8ca5bf"/><rect x="12" y="146" width="1" height="1" fill="#8ca5bf"/><rect x="1" y="145" width="1" height="1" fill="#8ca5bf"/><rect x="13" y="145" width="1" height="1" fill="#8ca5bf"/><rect x="1" y="144" width="1" height="1" fill="#8ca5bf"/><rect x="13" y="144" width="1" height="1" fill="#8ca5bf"/><rect x="5" y="147" width="5" height="1" fill="#fff"/><rect x="3" y="146" width="2" height="1" fill="#fff"/><rect x="10" y="146" width="2" height="1" fill="#fff"/><rect x="2" y="145" width="1" height="1" fill="#fff"/><rect x="12" y="145" width="1" height="1" fill="#fff"/><rect x="2" y="144" width="1" height="1" fill="#fff"/><rect x="12" y="144" width="1" height="1" fill="#fff"/><rect x="9" y="59" width="2" height="1" fill="#fff"/><rect x="9" y="60" width="1" height="1" fill="#fff"/><rect x="10" y="60" width="1" height="1" fill="#b0bccb"/><rect x="11" y="60" width="1" height="1" fill="#7893b0"/><rect x="10" y="61" width="1" height="1" fill="#7893b0"/><rect x="4" y="63" width="2" height="1" fill="#fff"/><rect x="4" y="64" width="1" height="1" fill="#fff"/><rect x="5" y="64" width="1" height="1" fill="#b0bccb"/><rect x="6" y="64" width="1" height="1" fill="#7893b0"/><rect x="5" y="65" width="1" height="1" fill="#7893b0"/><rect x="9" y="67" width="2" height="1" fill="#fff"/><rect x="9" y="68" width="1" height="1" fill="#fff"/><rect x="10" y="68" width="1" height="1" fill="#b0bccb"/><rect x="11" y="68" width="1" height="1" fill="#7893b0"/><rect x="10" y="69" width="1" height="1" fill="#7893b0"/><rect x="4" y="71" width="2" height="1" fill="#fff"/><rect x="4" y="72" width="1" height="1" fill="#fff"/><rect x="5" y="72" width="1" height="1" fill="#b0bccb"/><rect x="6" y="72" width="1" height="1" fill="#7893b0"/><rect x="5" y="73" width="1" height="1" fill="#7893b0"/><rect x="9" y="75" width="2" height="1" fill="#fff"/><rect x="9" y="76" width="1" height="1" fill="#fff"/><rect x="10" y="76" width="1" height="1" fill="#b0bccb"/><rect x="11" y="76" width="1" height="1" fill="#7893b0"/><rect x="10" y="77" width="1" height="1" fill="#7893b0"/><rect x="4" y="79" width="2" height="1" fill="#fff"/><rect x="4" y="80" width="1" height="1" fill="#fff"/><rect x="5" y="80" width="1" height="1" fill="#b0bccb"/><rect x="6" y="80" width="1" height="1" fill="#7893b0"/><rect x="5" y="81" width="1" height="1" fill="#7893b0"/><rect x="9" y="83" width="2" height="1" fill="#fff"/><rect x="9" y="84" width="1" height="1" fill="#fff"/><rect x="10" y="84" width="1" height="1" fill="#b0bccb"/><rect x="11" y="84" width="1" height="1" fill="#7893b0"/><rect x="10" y="85" width="1" height="1" fill="#7893b0"/></g><path d="M4 10H11.2L7.6 6Z" fill="#5a7090"/><path d="M4 139H11.2L7.6 143Z" fill="#5a7090"/></svg>
<div class="rb" style="left:13px;top:243px;width:641px;height:37px"></div>
<div class="t" style="left:22px;top:255px;font-size:11px;color:#000;letter-spacing:0.15px">Erfassung</div>
<div class="f" style="left:80px;top:253px;width:119px;height:18px;background:#eeeaee"></div>
<div class="t" style="left:83px;top:257px;font-size:11px;color:#000;letter-spacing:-0.11px">04.06.2021 10:00</div>
<div class="f" style="left:200px;top:253px;width:132px;height:18px;background:#eeeaee"></div>
<div class="t" style="left:202px;top:257px;font-size:11px;color:#000;letter-spacing:-0.55px">REFLEX</div>
<div class="t" style="left:337px;top:255px;font-size:11px;color:#000;">Änderung</div>
<div class="f" style="left:392px;top:253px;width:119px;height:18px;background:#eeeaee"></div>
<div class="f" style="left:512px;top:253px;width:132px;height:18px;background:#eeeaee"></div>
<div class="r" style="left:5px;top:292px;width:986px;height:1px;background:#807c81"></div>
<div class="t" style="left:11px;top:297px;font-size:11px;color:#000;letter-spacing:-0.08px">Baugruppen in eigenen Produktionsauftrag verplanen</div>
<div class="t" style="left:504px;top:301px;font-size:11px;color:#000;letter-spacing:-0.12px">Planungsart</div>
<div class="r" style="left:480px;top:317px;width:103px;height:1px;background:#000"></div>
<div class="t" style="left:535px;top:319px;font-size:11px;color:#000;letter-spacing:-0.45px">Komm.-</div>
<div class="t" style="left:593px;top:319px;font-size:11px;color:#000;">Automat.</div>
<div class="t" style="left:11px;top:334px;font-size:11px;color:#000;letter-spacing:0.05px">Baugruppentyp</div>
<div class="t" style="left:243px;top:334px;font-size:11px;color:#000;">Produktionsbereich</div>
<div class="t" style="left:482px;top:334px;font-size:11px;color:#000;letter-spacing:-0.2px">Anonym</div>
<div class="t" style="left:535px;top:334px;font-size:11px;color:#000;letter-spacing:-0.1px">bezogen</div>
<div class="t" style="left:593px;top:334px;font-size:11px;color:#000;letter-spacing:-0.3px">Planung</div>
<div class="t" style="left:653px;top:334px;font-size:11px;color:#000;">Produktionsschlüssel</div>
<div class="f" style="left:12px;top:354px;width:39px;height:18px;background:#e3ffff"></div>
<div class="f" style="left:52px;top:354px;width:172px;height:18px;background:#e3ffff"></div>
<svg class="r" style="left:227px;top:356px" width="16" height="16" viewBox="0 0 16 16" shape-rendering="crispEdges">
<rect x="0" y="0" width="16" height="16" fill="#d2cece"/>
<rect x="0" y="0" width="15" height="1" fill="#e4e0e0"/><rect x="0" y="0" width="1" height="15" fill="#e4e0e0"/>
<rect x="15" y="0" width="1" height="16" fill="#6b87a6"/><rect x="0" y="15" width="16" height="1" fill="#6b87a6"/>
<rect x="1" y="1" width="8" height="1" fill="#1f6aa0"/><rect x="9" y="1" width="1" height="1" fill="#000"/>
<rect x="1" y="1" width="1" height="8" fill="#1f6aa0"/><rect x="1" y="8" width="2" height="1" fill="#000"/>
<rect x="4" y="5" width="9" height="7" fill="#ffffff"/>
<rect x="3" y="3" width="11" height="2" fill="#000"/>
<rect x="3" y="3" width="1" height="10" fill="#000"/>
<rect x="13" y="4" width="1" height="9" fill="#1f6aa0"/><rect x="4" y="12" width="10" height="1" fill="#1f6aa0"/>
<rect x="12" y="5" width="1" height="7" fill="#c8c8c8"/><rect x="12" y="6" width="1" height="2" fill="#000"/>
<path d="M5 7V10.5L7.6 8.75Z" fill="#1a1aff" shape-rendering="auto"/>
<rect x="8" y="6" width="2" height="1" fill="#ff2020"/><rect x="8" y="8" width="2" height="1" fill="#ff2020"/><rect x="8" y="10" width="2" height="1" fill="#ff2020"/>
</svg>
<div class="f" style="left:245px;top:354px;width:38px;height:18px;background:#e3ffff"></div>
<div class="f" style="left:285px;top:354px;width:171px;height:18px;background:#e3ffff"></div>
<svg class="r" style="left:459px;top:356px" width="16" height="16" viewBox="0 0 16 16" shape-rendering="crispEdges">
<rect x="0" y="0" width="16" height="16" fill="#d2cece"/>
<rect x="0" y="0" width="15" height="1" fill="#e4e0e0"/><rect x="0" y="0" width="1" height="15" fill="#e4e0e0"/>
<rect x="15" y="0" width="1" height="16" fill="#6b87a6"/><rect x="0" y="15" width="16" height="1" fill="#6b87a6"/>
<rect x="1" y="1" width="8" height="1" fill="#1f6aa0"/><rect x="9" y="1" width="1" height="1" fill="#000"/>
<rect x="1" y="1" width="1" height="8" fill="#1f6aa0"/><rect x="1" y="8" width="2" height="1" fill="#000"/>
<rect x="4" y="5" width="9" height="7" fill="#ffffff"/>
<rect x="3" y="3" width="11" height="2" fill="#000"/>
<rect x="3" y="3" width="1" height="10" fill="#000"/>
<rect x="13" y="4" width="1" height="9" fill="#1f6aa0"/><rect x="4" y="12" width="10" height="1" fill="#1f6aa0"/>
<rect x="12" y="5" width="1" height="7" fill="#c8c8c8"/><rect x="12" y="6" width="1" height="2" fill="#000"/>
<path d="M5 7V10.5L7.6 8.75Z" fill="#1a1aff" shape-rendering="auto"/>
<rect x="8" y="6" width="2" height="1" fill="#ff2020"/><rect x="8" y="8" width="2" height="1" fill="#ff2020"/><rect x="8" y="10" width="2" height="1" fill="#ff2020"/>
</svg>
<div class="f" style="left:654px;top:354px;width:46px;height:18px;background:#e3ffff"></div>
<div class="f" style="left:701px;top:354px;width:172px;height:18px;background:#e3ffff"></div>
<svg class="r" style="left:876px;top:356px" width="16" height="16" viewBox="0 0 16 16" shape-rendering="crispEdges">
<rect x="0" y="0" width="16" height="16" fill="#d2cece"/>
<rect x="0" y="0" width="15" height="1" fill="#e4e0e0"/><rect x="0" y="0" width="1" height="15" fill="#e4e0e0"/>
<rect x="15" y="0" width="1" height="16" fill="#6b87a6"/><rect x="0" y="15" width="16" height="1" fill="#6b87a6"/>
<rect x="1" y="1" width="8" height="1" fill="#1f6aa0"/><rect x="9" y="1" width="1" height="1" fill="#000"/>
<rect x="1" y="1" width="1" height="8" fill="#1f6aa0"/><rect x="1" y="8" width="2" height="1" fill="#000"/>
<rect x="4" y="5" width="9" height="7" fill="#ffffff"/>
<rect x="3" y="3" width="11" height="2" fill="#000"/>
<rect x="3" y="3" width="1" height="10" fill="#000"/>
<rect x="13" y="4" width="1" height="9" fill="#1f6aa0"/><rect x="4" y="12" width="10" height="1" fill="#1f6aa0"/>
<rect x="12" y="5" width="1" height="7" fill="#c8c8c8"/><rect x="12" y="6" width="1" height="2" fill="#000"/>
<path d="M5 7V10.5L7.6 8.75Z" fill="#1a1aff" shape-rendering="auto"/>
<rect x="8" y="6" width="2" height="1" fill="#ff2020"/><rect x="8" y="8" width="2" height="1" fill="#ff2020"/><rect x="8" y="10" width="2" height="1" fill="#ff2020"/>
</svg>
<div class="r" style="left:482px;top:354px;width:17px;height:19px;background:#e3ffff"></div>
<div class="r" style="left:536px;top:354px;width:17px;height:19px;background:#e3ffff"></div>
<div class="r" style="left:606px;top:354px;width:17px;height:19px;background:#e3ffff"></div>
<div class="t" style="left:14px;top:358px;font-size:11px;color:#000;letter-spacing:-1px">UE</div>
<div class="t" style="left:54px;top:358px;font-size:11px;color:#000;">Unfertiges Erzeugnis</div>
<div class="t" style="left:246px;top:358px;font-size:11px;color:#000;">GB</div>
<div class="t" style="left:286px;top:358px;font-size:11px;color:#000;">Gestell</div>
<svg class="r" style="left:482px;top:358px" width="10" height="10" viewBox="0 0 10 10" shape-rendering="crispEdges"><rect x="3" y="1" width="4" height="1" fill="#ffffff"/><rect x="2" y="2" width="6" height="1" fill="#fff"/><rect x="1" y="3" width="8" height="4" fill="#fff"/><rect x="2" y="7" width="6" height="1" fill="#fff"/><rect x="3" y="8" width="4" height="1" fill="#fff"/><rect x="1" y="3" width="1" height="4" fill="#ffffff"/><rect x="8" y="2" width="1" height="1" fill="#fff"/><rect x="9" y="3" width="1" height="4" fill="#fff"/><rect x="8" y="7" width="1" height="1" fill="#fff"/><rect x="7" y="8" width="1" height="1" fill="#fff"/><rect x="3" y="9" width="4" height="1" fill="#fff"/><rect x="3" y="0" width="4" height="1" fill="#1f2d40"/><rect x="1" y="1" width="2" height="1" fill="#1f2d40"/><rect x="1" y="2" width="1" height="1" fill="#1f2d40"/><rect x="0" y="3" width="1" height="4" fill="#1f2d40"/><rect x="7" y="1" width="1" height="1" fill="#5a7aa0"/><rect x="1" y="7" width="1" height="1" fill="#5a7aa0"/></svg>
<svg class="r" style="left:536px;top:358px" width="10" height="10" viewBox="0 0 10 10" shape-rendering="crispEdges"><rect x="3" y="1" width="4" height="1" fill="#ffffff"/><rect x="2" y="2" width="6" height="1" fill="#fff"/><rect x="1" y="3" width="8" height="4" fill="#fff"/><rect x="2" y="7" width="6" height="1" fill="#fff"/><rect x="3" y="8" width="4" height="1" fill="#fff"/><rect x="1" y="3" width="1" height="4" fill="#ffffff"/><rect x="8" y="2" width="1" height="1" fill="#fff"/><rect x="9" y="3" width="1" height="4" fill="#fff"/><rect x="8" y="7" width="1" height="1" fill="#fff"/><rect x="7" y="8" width="1" height="1" fill="#fff"/><rect x="3" y="9" width="4" height="1" fill="#fff"/><rect x="3" y="0" width="4" height="1" fill="#1f2d40"/><rect x="1" y="1" width="2" height="1" fill="#1f2d40"/><rect x="1" y="2" width="1" height="1" fill="#1f2d40"/><rect x="0" y="3" width="1" height="4" fill="#1f2d40"/><rect x="7" y="1" width="1" height="1" fill="#5a7aa0"/><rect x="1" y="7" width="1" height="1" fill="#5a7aa0"/><rect x="3" y="2" width="4" height="6" fill="#25344a"/><rect x="2" y="3" width="6" height="4" fill="#25344a"/></svg>
<div class="r" style="left:607px;top:358px;width:10px;height:10px;background:#fff"></div>
<svg class="r" style="left:606px;top:357px" width="12" height="11" viewBox="0 0 12 11"><path d="M0.6 10V0.6H10" fill="none" stroke="#1f2d40" stroke-width="1.2"/></svg>
<div class="f" style="left:12px;top:373px;width:39px;height:18px;background:#fff"></div>
<div class="f" style="left:52px;top:373px;width:172px;height:18px;background:#fff"></div>
<svg class="r" style="left:227px;top:375px" width="16" height="16" viewBox="0 0 16 16" shape-rendering="crispEdges">
<rect x="0" y="0" width="16" height="16" fill="#c9c7c9"/>
<rect x="0" y="0" width="15" height="1" fill="#c4d0da"/><rect x="0" y="0" width="1" height="15" fill="#c4d0da"/>
<rect x="15" y="0" width="1" height="16" fill="#7d97b3"/><rect x="0" y="15" width="16" height="1" fill="#7d97b3"/>
<rect x="1" y="1" width="8" height="1" fill="#ffffff"/><rect x="9" y="1" width="1" height="1" fill="#555"/>
<rect x="1" y="1" width="1" height="8" fill="#ffffff"/><rect x="1" y="8" width="2" height="1" fill="#555"/>
<rect x="4" y="5" width="9" height="7" fill="#ffffff"/>
<rect x="3" y="3" width="11" height="2" fill="#6f6f6f"/>
<rect x="3" y="3" width="1" height="10" fill="#6f6f6f"/>
<rect x="13" y="4" width="1" height="9" fill="#9a9a9a"/><rect x="4" y="12" width="10" height="1" fill="#9a9a9a"/>
<rect x="12" y="5" width="1" height="7" fill="#e0e0e0"/><rect x="12" y="6" width="1" height="2" fill="#6f6f6f"/>
<path d="M5 7V10.5L7.6 8.75Z" fill="#8a8a8a" shape-rendering="auto"/>
<rect x="8" y="6" width="2" height="1" fill="#8a8a8a"/><rect x="8" y="8" width="2" height="1" fill="#8a8a8a"/><rect x="8" y="10" width="2" height="1" fill="#8a8a8a"/>
</svg>
<div class="f" style="left:245px;top:373px;width:38px;height:18px;background:#fff"></div>
<div class="f" style="left:285px;top:373px;width:171px;height:18px;background:#fff"></div>
<svg class="r" style="left:459px;top:375px" width="16" height="16" viewBox="0 0 16 16" shape-rendering="crispEdges">
<rect x="0" y="0" width="16" height="16" fill="#c9c7c9"/>
<rect x="0" y="0" width="15" height="1" fill="#c4d0da"/><rect x="0" y="0" width="1" height="15" fill="#c4d0da"/>
<rect x="15" y="0" width="1" height="16" fill="#7d97b3"/><rect x="0" y="15" width="16" height="1" fill="#7d97b3"/>
<rect x="1" y="1" width="8" height="1" fill="#ffffff"/><rect x="9" y="1" width="1" height="1" fill="#555"/>
<rect x="1" y="1" width="1" height="8" fill="#ffffff"/><rect x="1" y="8" width="2" height="1" fill="#555"/>
<rect x="4" y="5" width="9" height="7" fill="#ffffff"/>
<rect x="3" y="3" width="11" height="2" fill="#6f6f6f"/>
<rect x="3" y="3" width="1" height="10" fill="#6f6f6f"/>
<rect x="13" y="4" width="1" height="9" fill="#9a9a9a"/><rect x="4" y="12" width="10" height="1" fill="#9a9a9a"/>
<rect x="12" y="5" width="1" height="7" fill="#e0e0e0"/><rect x="12" y="6" width="1" height="2" fill="#6f6f6f"/>
<path d="M5 7V10.5L7.6 8.75Z" fill="#8a8a8a" shape-rendering="auto"/>
<rect x="8" y="6" width="2" height="1" fill="#8a8a8a"/><rect x="8" y="8" width="2" height="1" fill="#8a8a8a"/><rect x="8" y="10" width="2" height="1" fill="#8a8a8a"/>
</svg>
<div class="f" style="left:654px;top:373px;width:46px;height:18px;background:#fff"></div>
<div class="f" style="left:701px;top:373px;width:172px;height:18px;background:#fff"></div>
<svg class="r" style="left:876px;top:375px" width="16" height="16" viewBox="0 0 16 16" shape-rendering="crispEdges">
<rect x="0" y="0" width="16" height="16" fill="#c9c7c9"/>
<rect x="0" y="0" width="15" height="1" fill="#c4d0da"/><rect x="0" y="0" width="1" height="15" fill="#c4d0da"/>
<rect x="15" y="0" width="1" height="16" fill="#7d97b3"/><rect x="0" y="15" width="16" height="1" fill="#7d97b3"/>
<rect x="1" y="1" width="8" height="1" fill="#ffffff"/><rect x="9" y="1" width="1" height="1" fill="#555"/>
<rect x="1" y="1" width="1" height="8" fill="#ffffff"/><rect x="1" y="8" width="2" height="1" fill="#555"/>
<rect x="4" y="5" width="9" height="7" fill="#ffffff"/>
<rect x="3" y="3" width="11" height="2" fill="#6f6f6f"/>
<rect x="3" y="3" width="1" height="10" fill="#6f6f6f"/>
<rect x="13" y="4" width="1" height="9" fill="#9a9a9a"/><rect x="4" y="12" width="10" height="1" fill="#9a9a9a"/>
<rect x="12" y="5" width="1" height="7" fill="#e0e0e0"/><rect x="12" y="6" width="1" height="2" fill="#6f6f6f"/>
<path d="M5 7V10.5L7.6 8.75Z" fill="#8a8a8a" shape-rendering="auto"/>
<rect x="8" y="6" width="2" height="1" fill="#8a8a8a"/><rect x="8" y="8" width="2" height="1" fill="#8a8a8a"/><rect x="8" y="10" width="2" height="1" fill="#8a8a8a"/>
</svg>
<svg class="r" style="left:482px;top:377px" width="10" height="10" viewBox="0 0 10 10" shape-rendering="crispEdges"><rect x="3" y="1" width="4" height="1" fill="#e6e6e6"/><rect x="2" y="2" width="6" height="1" fill="#d0d0d0"/><rect x="1" y="3" width="8" height="4" fill="#d0d0d0"/><rect x="2" y="7" width="6" height="1" fill="#d0d0d0"/><rect x="3" y="8" width="4" height="1" fill="#d0d0d0"/><rect x="1" y="3" width="1" height="4" fill="#e6e6e6"/><rect x="3" y="0" width="4" height="1" fill="#1f2d40"/><rect x="1" y="1" width="2" height="1" fill="#1f2d40"/><rect x="1" y="2" width="1" height="1" fill="#1f2d40"/><rect x="0" y="3" width="1" height="4" fill="#1f2d40"/><rect x="7" y="1" width="1" height="1" fill="#5a7aa0"/><rect x="1" y="7" width="1" height="1" fill="#5a7aa0"/></svg>
<svg class="r" style="left:536px;top:377px" width="10" height="10" viewBox="0 0 10 10" shape-rendering="crispEdges"><rect x="3" y="1" width="4" height="1" fill="#e6e6e6"/><rect x="2" y="2" width="6" height="1" fill="#d0d0d0"/><rect x="1" y="3" width="8" height="4" fill="#d0d0d0"/><rect x="2" y="7" width="6" height="1" fill="#d0d0d0"/><rect x="3" y="8" width="4" height="1" fill="#d0d0d0"/><rect x="1" y="3" width="1" height="4" fill="#e6e6e6"/><rect x="3" y="0" width="4" height="1" fill="#1f2d40"/><rect x="1" y="1" width="2" height="1" fill="#1f2d40"/><rect x="1" y="2" width="1" height="1" fill="#1f2d40"/><rect x="0" y="3" width="1" height="4" fill="#1f2d40"/><rect x="7" y="1" width="1" height="1" fill="#5a7aa0"/><rect x="1" y="7" width="1" height="1" fill="#5a7aa0"/></svg>
<div class="r" style="left:607px;top:377px;width:9px;height:10px;background:#d0d0d0"></div>
<svg class="r" style="left:606px;top:376px" width="12" height="11" viewBox="0 0 12 11"><path d="M0.6 10V0.6H10" fill="none" stroke="#1f2d40" stroke-width="1.2"/></svg>
<div class="f" style="left:12px;top:392px;width:39px;height:17px;background:#fff"></div>
<div class="f" style="left:52px;top:392px;width:172px;height:17px;background:#fff"></div>
<svg class="r" style="left:227px;top:394px" width="16" height="16" viewBox="0 0 16 16" shape-rendering="crispEdges">
<rect x="0" y="0" width="16" height="16" fill="#c9c7c9"/>
<rect x="0" y="0" width="15" height="1" fill="#c4d0da"/><rect x="0" y="0" width="1" height="15" fill="#c4d0da"/>
<rect x="15" y="0" width="1" height="16" fill="#7d97b3"/><rect x="0" y="15" width="16" height="1" fill="#7d97b3"/>
<rect x="1" y="1" width="8" height="1" fill="#ffffff"/><rect x="9" y="1" width="1" height="1" fill="#555"/>
<rect x="1" y="1" width="1" height="8" fill="#ffffff"/><rect x="1" y="8" width="2" height="1" fill="#555"/>
<rect x="4" y="5" width="9" height="7" fill="#ffffff"/>
<rect x="3" y="3" width="11" height="2" fill="#6f6f6f"/>
<rect x="3" y="3" width="1" height="10" fill="#6f6f6f"/>
<rect x="13" y="4" width="1" height="9" fill="#9a9a9a"/><rect x="4" y="12" width="10" height="1" fill="#9a9a9a"/>
<rect x="12" y="5" width="1" height="7" fill="#e0e0e0"/><rect x="12" y="6" width="1" height="2" fill="#6f6f6f"/>
<path d="M5 7V10.5L7.6 8.75Z" fill="#8a8a8a" shape-rendering="auto"/>
<rect x="8" y="6" width="2" height="1" fill="#8a8a8a"/><rect x="8" y="8" width="2" height="1" fill="#8a8a8a"/><rect x="8" y="10" width="2" height="1" fill="#8a8a8a"/>
</svg>
<div class="f" style="left:245px;top:392px;width:38px;height:17px;background:#fff"></div>
<div class="f" style="left:285px;top:392px;width:171px;height:17px;background:#fff"></div>
<svg class="r" style="left:459px;top:394px" width="16" height="16" viewBox="0 0 16 16" shape-rendering="crispEdges">
<rect x="0" y="0" width="16" height="16" fill="#c9c7c9"/>
<rect x="0" y="0" width="15" height="1" fill="#c4d0da"/><rect x="0" y="0" width="1" height="15" fill="#c4d0da"/>
<rect x="15" y="0" width="1" height="16" fill="#7d97b3"/><rect x="0" y="15" width="16" height="1" fill="#7d97b3"/>
<rect x="1" y="1" width="8" height="1" fill="#ffffff"/><rect x="9" y="1" width="1" height="1" fill="#555"/>
<rect x="1" y="1" width="1" height="8" fill="#ffffff"/><rect x="1" y="8" width="2" height="1" fill="#555"/>
<rect x="4" y="5" width="9" height="7" fill="#ffffff"/>
<rect x="3" y="3" width="11" height="2" fill="#6f6f6f"/>
<rect x="3" y="3" width="1" height="10" fill="#6f6f6f"/>
<rect x="13" y="4" width="1" height="9" fill="#9a9a9a"/><rect x="4" y="12" width="10" height="1" fill="#9a9a9a"/>
<rect x="12" y="5" width="1" height="7" fill="#e0e0e0"/><rect x="12" y="6" width="1" height="2" fill="#6f6f6f"/>
<path d="M5 7V10.5L7.6 8.75Z" fill="#8a8a8a" shape-rendering="auto"/>
<rect x="8" y="6" width="2" height="1" fill="#8a8a8a"/><rect x="8" y="8" width="2" height="1" fill="#8a8a8a"/><rect x="8" y="10" width="2" height="1" fill="#8a8a8a"/>
</svg>
<div class="f" style="left:654px;top:392px;width:46px;height:17px;background:#fff"></div>
<div class="f" style="left:701px;top:392px;width:172px;height:17px;background:#fff"></div>
<svg class="r" style="left:876px;top:394px" width="16" height="16" viewBox="0 0 16 16" shape-rendering="crispEdges">
<rect x="0" y="0" width="16" height="16" fill="#c9c7c9"/>
<rect x="0" y="0" width="15" height="1" fill="#c4d0da"/><rect x="0" y="0" width="1" height="15" fill="#c4d0da"/>
<rect x="15" y="0" width="1" height="16" fill="#7d97b3"/><rect x="0" y="15" width="16" height="1" fill="#7d97b3"/>
<rect x="1" y="1" width="8" height="1" fill="#ffffff"/><rect x="9" y="1" width="1" height="1" fill="#555"/>
<rect x="1" y="1" width="1" height="8" fill="#ffffff"/><rect x="1" y="8" width="2" height="1" fill="#555"/>
<rect x="4" y="5" width="9" height="7" fill="#ffffff"/>
<rect x="3" y="3" width="11" height="2" fill="#6f6f6f"/>
<rect x="3" y="3" width="1" height="10" fill="#6f6f6f"/>
<rect x="13" y="4" width="1" height="9" fill="#9a9a9a"/><rect x="4" y="12" width="10" height="1" fill="#9a9a9a"/>
<rect x="12" y="5" width="1" height="7" fill="#e0e0e0"/><rect x="12" y="6" width="1" height="2" fill="#6f6f6f"/>
<path d="M5 7V10.5L7.6 8.75Z" fill="#8a8a8a" shape-rendering="auto"/>
<rect x="8" y="6" width="2" height="1" fill="#8a8a8a"/><rect x="8" y="8" width="2" height="1" fill="#8a8a8a"/><rect x="8" y="10" width="2" height="1" fill="#8a8a8a"/>
</svg>
<svg class="r" style="left:482px;top:396px" width="10" height="10" viewBox="0 0 10 10" shape-rendering="crispEdges"><rect x="3" y="1" width="4" height="1" fill="#e6e6e6"/><rect x="2" y="2" width="6" height="1" fill="#d0d0d0"/><rect x="1" y="3" width="8" height="4" fill="#d0d0d0"/><rect x="2" y="7" width="6" height="1" fill="#d0d0d0"/><rect x="3" y="8" width="4" height="1" fill="#d0d0d0"/><rect x="1" y="3" width="1" height="4" fill="#e6e6e6"/><rect x="3" y="0" width="4" height="1" fill="#1f2d40"/><rect x="1" y="1" width="2" height="1" fill="#1f2d40"/><rect x="1" y="2" width="1" height="1" fill="#1f2d40"/><rect x="0" y="3" width="1" height="4" fill="#1f2d40"/><rect x="7" y="1" width="1" height="1" fill="#5a7aa0"/><rect x="1" y="7" width="1" height="1" fill="#5a7aa0"/></svg>
<svg class="r" style="left:536px;top:396px" width="10" height="10" viewBox="0 0 10 10" shape-rendering="crispEdges"><rect x="3" y="1" width="4" height="1" fill="#e6e6e6"/><rect x="2" y="2" width="6" height="1" fill="#d0d0d0"/><rect x="1" y="3" width="8" height="4" fill="#d0d0d0"/><rect x="2" y="7" width="6" height="1" fill="#d0d0d0"/><rect x="3" y="8" width="4" height="1" fill="#d0d0d0"/><rect x="1" y="3" width="1" height="4" fill="#e6e6e6"/><rect x="3" y="0" width="4" height="1" fill="#1f2d40"/><rect x="1" y="1" width="2" height="1" fill="#1f2d40"/><rect x="1" y="2" width="1" height="1" fill="#1f2d40"/><rect x="0" y="3" width="1" height="4" fill="#1f2d40"/><rect x="7" y="1" width="1" height="1" fill="#5a7aa0"/><rect x="1" y="7" width="1" height="1" fill="#5a7aa0"/></svg>
<div class="r" style="left:607px;top:396px;width:9px;height:10px;background:#d0d0d0"></div>
<svg class="r" style="left:606px;top:395px" width="12" height="11" viewBox="0 0 12 11"><path d="M0.6 10V0.6H10" fill="none" stroke="#1f2d40" stroke-width="1.2"/></svg>
<div class="f" style="left:12px;top:410px;width:39px;height:18px;background:#fff"></div>
<div class="f" style="left:52px;top:410px;width:172px;height:18px;background:#fff"></div>
<svg class="r" style="left:227px;top:412px" width="16" height="16" viewBox="0 0 16 16" shape-rendering="crispEdges">
<rect x="0" y="0" width="16" height="16" fill="#c9c7c9"/>
<rect x="0" y="0" width="15" height="1" fill="#c4d0da"/><rect x="0" y="0" width="1" height="15" fill="#c4d0da"/>
<rect x="15" y="0" width="1" height="16" fill="#7d97b3"/><rect x="0" y="15" width="16" height="1" fill="#7d97b3"/>
<rect x="1" y="1" width="8" height="1" fill="#ffffff"/><rect x="9" y="1" width="1" height="1" fill="#555"/>
<rect x="1" y="1" width="1" height="8" fill="#ffffff"/><rect x="1" y="8" width="2" height="1" fill="#555"/>
<rect x="4" y="5" width="9" height="7" fill="#ffffff"/>
<rect x="3" y="3" width="11" height="2" fill="#6f6f6f"/>
<rect x="3" y="3" width="1" height="10" fill="#6f6f6f"/>
<rect x="13" y="4" width="1" height="9" fill="#9a9a9a"/><rect x="4" y="12" width="10" height="1" fill="#9a9a9a"/>
<rect x="12" y="5" width="1" height="7" fill="#e0e0e0"/><rect x="12" y="6" width="1" height="2" fill="#6f6f6f"/>
<path d="M5 7V10.5L7.6 8.75Z" fill="#8a8a8a" shape-rendering="auto"/>
<rect x="8" y="6" width="2" height="1" fill="#8a8a8a"/><rect x="8" y="8" width="2" height="1" fill="#8a8a8a"/><rect x="8" y="10" width="2" height="1" fill="#8a8a8a"/>
</svg>
<div class="f" style="left:245px;top:410px;width:38px;height:18px;background:#fff"></div>
<div class="f" style="left:285px;top:410px;width:171px;height:18px;background:#fff"></div>
<svg class="r" style="left:459px;top:412px" width="16" height="16" viewBox="0 0 16 16" shape-rendering="crispEdges">
<rect x="0" y="0" width="16" height="16" fill="#c9c7c9"/>
<rect x="0" y="0" width="15" height="1" fill="#c4d0da"/><rect x="0" y="0" width="1" height="15" fill="#c4d0da"/>
<rect x="15" y="0" width="1" height="16" fill="#7d97b3"/><rect x="0" y="15" width="16" height="1" fill="#7d97b3"/>
<rect x="1" y="1" width="8" height="1" fill="#ffffff"/><rect x="9" y="1" width="1" height="1" fill="#555"/>
<rect x="1" y="1" width="1" height="8" fill="#ffffff"/><rect x="1" y="8" width="2" height="1" fill="#555"/>
<rect x="4" y="5" width="9" height="7" fill="#ffffff"/>
<rect x="3" y="3" width="11" height="2" fill="#6f6f6f"/>
<rect x="3" y="3" width="1" height="10" fill="#6f6f6f"/>
<rect x="13" y="4" width="1" height="9" fill="#9a9a9a"/><rect x="4" y="12" width="10" height="1" fill="#9a9a9a"/>
<rect x="12" y="5" width="1" height="7" fill="#e0e0e0"/><rect x="12" y="6" width="1" height="2" fill="#6f6f6f"/>
<path d="M5 7V10.5L7.6 8.75Z" fill="#8a8a8a" shape-rendering="auto"/>
<rect x="8" y="6" width="2" height="1" fill="#8a8a8a"/><rect x="8" y="8" width="2" height="1" fill="#8a8a8a"/><rect x="8" y="10" width="2" height="1" fill="#8a8a8a"/>
</svg>
<div class="f" style="left:654px;top:410px;width:46px;height:18px;background:#fff"></div>
<div class="f" style="left:701px;top:410px;width:172px;height:18px;background:#fff"></div>
<svg class="r" style="left:876px;top:412px" width="16" height="16" viewBox="0 0 16 16" shape-rendering="crispEdges">
<rect x="0" y="0" width="16" height="16" fill="#c9c7c9"/>
<rect x="0" y="0" width="15" height="1" fill="#c4d0da"/><rect x="0" y="0" width="1" height="15" fill="#c4d0da"/>
<rect x="15" y="0" width="1" height="16" fill="#7d97b3"/><rect x="0" y="15" width="16" height="1" fill="#7d97b3"/>
<rect x="1" y="1" width="8" height="1" fill="#ffffff"/><rect x="9" y="1" width="1" height="1" fill="#555"/>
<rect x="1" y="1" width="1" height="8" fill="#ffffff"/><rect x="1" y="8" width="2" height="1" fill="#555"/>
<rect x="4" y="5" width="9" height="7" fill="#ffffff"/>
<rect x="3" y="3" width="11" height="2" fill="#6f6f6f"/>
<rect x="3" y="3" width="1" height="10" fill="#6f6f6f"/>
<rect x="13" y="4" width="1" height="9" fill="#9a9a9a"/><rect x="4" y="12" width="10" height="1" fill="#9a9a9a"/>
<rect x="12" y="5" width="1" height="7" fill="#e0e0e0"/><rect x="12" y="6" width="1" height="2" fill="#6f6f6f"/>
<path d="M5 7V10.5L7.6 8.75Z" fill="#8a8a8a" shape-rendering="auto"/>
<rect x="8" y="6" width="2" height="1" fill="#8a8a8a"/><rect x="8" y="8" width="2" height="1" fill="#8a8a8a"/><rect x="8" y="10" width="2" height="1" fill="#8a8a8a"/>
</svg>
<svg class="r" style="left:482px;top:414px" width="10" height="10" viewBox="0 0 10 10" shape-rendering="crispEdges"><rect x="3" y="1" width="4" height="1" fill="#e6e6e6"/><rect x="2" y="2" width="6" height="1" fill="#d0d0d0"/><rect x="1" y="3" width="8" height="4" fill="#d0d0d0"/><rect x="2" y="7" width="6" height="1" fill="#d0d0d0"/><rect x="3" y="8" width="4" height="1" fill="#d0d0d0"/><rect x="1" y="3" width="1" height="4" fill="#e6e6e6"/><rect x="3" y="0" width="4" height="1" fill="#1f2d40"/><rect x="1" y="1" width="2" height="1" fill="#1f2d40"/><rect x="1" y="2" width="1" height="1" fill="#1f2d40"/><rect x="0" y="3" width="1" height="4" fill="#1f2d40"/><rect x="7" y="1" width="1" height="1" fill="#5a7aa0"/><rect x="1" y="7" width="1" height="1" fill="#5a7aa0"/></svg>
<svg class="r" style="left:536px;top:414px" width="10" height="10" viewBox="0 0 10 10" shape-rendering="crispEdges"><rect x="3" y="1" width="4" height="1" fill="#e6e6e6"/><rect x="2" y="2" width="6" height="1" fill="#d0d0d0"/><rect x="1" y="3" width="8" height="4" fill="#d0d0d0"/><rect x="2" y="7" width="6" height="1" fill="#d0d0d0"/><rect x="3" y="8" width="4" height="1" fill="#d0d0d0"/><rect x="1" y="3" width="1" height="4" fill="#e6e6e6"/><rect x="3" y="0" width="4" height="1" fill="#1f2d40"/><rect x="1" y="1" width="2" height="1" fill="#1f2d40"/><rect x="1" y="2" width="1" height="1" fill="#1f2d40"/><rect x="0" y="3" width="1" height="4" fill="#1f2d40"/><rect x="7" y="1" width="1" height="1" fill="#5a7aa0"/><rect x="1" y="7" width="1" height="1" fill="#5a7aa0"/></svg>
<div class="r" style="left:607px;top:414px;width:9px;height:10px;background:#d0d0d0"></div>
<svg class="r" style="left:606px;top:413px" width="12" height="11" viewBox="0 0 12 11"><path d="M0.6 10V0.6H10" fill="none" stroke="#1f2d40" stroke-width="1.2"/></svg>
<div class="f" style="left:12px;top:429px;width:39px;height:18px;background:#fff"></div>
<div class="f" style="left:52px;top:429px;width:172px;height:18px;background:#fff"></div>
<svg class="r" style="left:227px;top:431px" width="16" height="16" viewBox="0 0 16 16" shape-rendering="crispEdges">
<rect x="0" y="0" width="16" height="16" fill="#c9c7c9"/>
<rect x="0" y="0" width="15" height="1" fill="#c4d0da"/><rect x="0" y="0" width="1" height="15" fill="#c4d0da"/>
<rect x="15" y="0" width="1" height="16" fill="#7d97b3"/><rect x="0" y="15" width="16" height="1" fill="#7d97b3"/>
<rect x="1" y="1" width="8" height="1" fill="#ffffff"/><rect x="9" y="1" width="1" height="1" fill="#555"/>
<rect x="1" y="1" width="1" height="8" fill="#ffffff"/><rect x="1" y="8" width="2" height="1" fill="#555"/>
<rect x="4" y="5" width="9" height="7" fill="#ffffff"/>
<rect x="3" y="3" width="11" height="2" fill="#6f6f6f"/>
<rect x="3" y="3" width="1" height="10" fill="#6f6f6f"/>
<rect x="13" y="4" width="1" height="9" fill="#9a9a9a"/><rect x="4" y="12" width="10" height="1" fill="#9a9a9a"/>
<rect x="12" y="5" width="1" height="7" fill="#e0e0e0"/><rect x="12" y="6" width="1" height="2" fill="#6f6f6f"/>
<path d="M5 7V10.5L7.6 8.75Z" fill="#8a8a8a" shape-rendering="auto"/>
<rect x="8" y="6" width="2" height="1" fill="#8a8a8a"/><rect x="8" y="8" width="2" height="1" fill="#8a8a8a"/><rect x="8" y="10" width="2" height="1" fill="#8a8a8a"/>
</svg>
<div class="f" style="left:245px;top:429px;width:38px;height:18px;background:#fff"></div>
<div class="f" style="left:285px;top:429px;width:171px;height:18px;background:#fff"></div>
<svg class="r" style="left:459px;top:431px" width="16" height="16" viewBox="0 0 16 16" shape-rendering="crispEdges">
<rect x="0" y="0" width="16" height="16" fill="#c9c7c9"/>
<rect x="0" y="0" width="15" height="1" fill="#c4d0da"/><rect x="0" y="0" width="1" height="15" fill="#c4d0da"/>
<rect x="15" y="0" width="1" height="16" fill="#7d97b3"/><rect x="0" y="15" width="16" height="1" fill="#7d97b3"/>
<rect x="1" y="1" width="8" height="1" fill="#ffffff"/><rect x="9" y="1" width="1" height="1" fill="#555"/>
<rect x="1" y="1" width="1" height="8" fill="#ffffff"/><rect x="1" y="8" width="2" height="1" fill="#555"/>
<rect x="4" y="5" width="9" height="7" fill="#ffffff"/>
<rect x="3" y="3" width="11" height="2" fill="#6f6f6f"/>
<rect x="3" y="3" width="1" height="10" fill="#6f6f6f"/>
<rect x="13" y="4" width="1" height="9" fill="#9a9a9a"/><rect x="4" y="12" width="10" height="1" fill="#9a9a9a"/>
<rect x="12" y="5" width="1" height="7" fill="#e0e0e0"/><rect x="12" y="6" width="1" height="2" fill="#6f6f6f"/>
<path d="M5 7V10.5L7.6 8.75Z" fill="#8a8a8a" shape-rendering="auto"/>
<rect x="8" y="6" width="2" height="1" fill="#8a8a8a"/><rect x="8" y="8" width="2" height="1" fill="#8a8a8a"/><rect x="8" y="10" width="2" height="1" fill="#8a8a8a"/>
</svg>
<div class="f" style="left:654px;top:429px;width:46px;height:18px;background:#fff"></div>
<div class="f" style="left:701px;top:429px;width:172px;height:18px;background:#fff"></div>
<svg class="r" style="left:876px;top:431px" width="16" height="16" viewBox="0 0 16 16" shape-rendering="crispEdges">
<rect x="0" y="0" width="16" height="16" fill="#c9c7c9"/>
<rect x="0" y="0" width="15" height="1" fill="#c4d0da"/><rect x="0" y="0" width="1" height="15" fill="#c4d0da"/>
<rect x="15" y="0" width="1" height="16" fill="#7d97b3"/><rect x="0" y="15" width="16" height="1" fill="#7d97b3"/>
<rect x="1" y="1" width="8" height="1" fill="#ffffff"/><rect x="9" y="1" width="1" height="1" fill="#555"/>
<rect x="1" y="1" width="1" height="8" fill="#ffffff"/><rect x="1" y="8" width="2" height="1" fill="#555"/>
<rect x="4" y="5" width="9" height="7" fill="#ffffff"/>
<rect x="3" y="3" width="11" height="2" fill="#6f6f6f"/>
<rect x="3" y="3" width="1" height="10" fill="#6f6f6f"/>
<rect x="13" y="4" width="1" height="9" fill="#9a9a9a"/><rect x="4" y="12" width="10" height="1" fill="#9a9a9a"/>
<rect x="12" y="5" width="1" height="7" fill="#e0e0e0"/><rect x="12" y="6" width="1" height="2" fill="#6f6f6f"/>
<path d="M5 7V10.5L7.6 8.75Z" fill="#8a8a8a" shape-rendering="auto"/>
<rect x="8" y="6" width="2" height="1" fill="#8a8a8a"/><rect x="8" y="8" width="2" height="1" fill="#8a8a8a"/><rect x="8" y="10" width="2" height="1" fill="#8a8a8a"/>
</svg>
<svg class="r" style="left:482px;top:433px" width="10" height="10" viewBox="0 0 10 10" shape-rendering="crispEdges"><rect x="3" y="1" width="4" height="1" fill="#e6e6e6"/><rect x="2" y="2" width="6" height="1" fill="#d0d0d0"/><rect x="1" y="3" width="8" height="4" fill="#d0d0d0"/><rect x="2" y="7" width="6" height="1" fill="#d0d0d0"/><rect x="3" y="8" width="4" height="1" fill="#d0d0d0"/><rect x="1" y="3" width="1" height="4" fill="#e6e6e6"/><rect x="3" y="0" width="4" height="1" fill="#1f2d40"/><rect x="1" y="1" width="2" height="1" fill="#1f2d40"/><rect x="1" y="2" width="1" height="1" fill="#1f2d40"/><rect x="0" y="3" width="1" height="4" fill="#1f2d40"/><rect x="7" y="1" width="1" height="1" fill="#5a7aa0"/><rect x="1" y="7" width="1" height="1" fill="#5a7aa0"/></svg>
<svg class="r" style="left:536px;top:433px" width="10" height="10" viewBox="0 0 10 10" shape-rendering="crispEdges"><rect x="3" y="1" width="4" height="1" fill="#e6e6e6"/><rect x="2" y="2" width="6" height="1" fill="#d0d0d0"/><rect x="1" y="3" width="8" height="4" fill="#d0d0d0"/><rect x="2" y="7" width="6" height="1" fill="#d0d0d0"/><rect x="3" y="8" width="4" height="1" fill="#d0d0d0"/><rect x="1" y="3" width="1" height="4" fill="#e6e6e6"/><rect x="3" y="0" width="4" height="1" fill="#1f2d40"/><rect x="1" y="1" width="2" height="1" fill="#1f2d40"/><rect x="1" y="2" width="1" height="1" fill="#1f2d40"/><rect x="0" y="3" width="1" height="4" fill="#1f2d40"/><rect x="7" y="1" width="1" height="1" fill="#5a7aa0"/><rect x="1" y="7" width="1" height="1" fill="#5a7aa0"/></svg>
<div class="r" style="left:607px;top:433px;width:9px;height:10px;background:#d0d0d0"></div>
<svg class="r" style="left:606px;top:432px" width="12" height="11" viewBox="0 0 12 11"><path d="M0.6 10V0.6H10" fill="none" stroke="#1f2d40" stroke-width="1.2"/></svg>
<div class="f" style="left:12px;top:448px;width:39px;height:17px;background:#fff"></div>
<div class="f" style="left:52px;top:448px;width:172px;height:17px;background:#fff"></div>
<svg class="r" style="left:227px;top:450px" width="16" height="16" viewBox="0 0 16 16" shape-rendering="crispEdges">
<rect x="0" y="0" width="16" height="16" fill="#c9c7c9"/>
<rect x="0" y="0" width="15" height="1" fill="#c4d0da"/><rect x="0" y="0" width="1" height="15" fill="#c4d0da"/>
<rect x="15" y="0" width="1" height="16" fill="#7d97b3"/><rect x="0" y="15" width="16" height="1" fill="#7d97b3"/>
<rect x="1" y="1" width="8" height="1" fill="#ffffff"/><rect x="9" y="1" width="1" height="1" fill="#555"/>
<rect x="1" y="1" width="1" height="8" fill="#ffffff"/><rect x="1" y="8" width="2" height="1" fill="#555"/>
<rect x="4" y="5" width="9" height="7" fill="#ffffff"/>
<rect x="3" y="3" width="11" height="2" fill="#6f6f6f"/>
<rect x="3" y="3" width="1" height="10" fill="#6f6f6f"/>
<rect x="13" y="4" width="1" height="9" fill="#9a9a9a"/><rect x="4" y="12" width="10" height="1" fill="#9a9a9a"/>
<rect x="12" y="5" width="1" height="7" fill="#e0e0e0"/><rect x="12" y="6" width="1" height="2" fill="#6f6f6f"/>
<path d="M5 7V10.5L7.6 8.75Z" fill="#8a8a8a" shape-rendering="auto"/>
<rect x="8" y="6" width="2" height="1" fill="#8a8a8a"/><rect x="8" y="8" width="2" height="1" fill="#8a8a8a"/><rect x="8" y="10" width="2" height="1" fill="#8a8a8a"/>
</svg>
<div class="f" style="left:245px;top:448px;width:38px;height:17px;background:#fff"></div>
<div class="f" style="left:285px;top:448px;width:171px;height:17px;background:#fff"></div>
<svg class="r" style="left:459px;top:450px" width="16" height="16" viewBox="0 0 16 16" shape-rendering="crispEdges">
<rect x="0" y="0" width="16" height="16" fill="#c9c7c9"/>
<rect x="0" y="0" width="15" height="1" fill="#c4d0da"/><rect x="0" y="0" width="1" height="15" fill="#c4d0da"/>
<rect x="15" y="0" width="1" height="16" fill="#7d97b3"/><rect x="0" y="15" width="16" height="1" fill="#7d97b3"/>
<rect x="1" y="1" width="8" height="1" fill="#ffffff"/><rect x="9" y="1" width="1" height="1" fill="#555"/>
<rect x="1" y="1" width="1" height="8" fill="#ffffff"/><rect x="1" y="8" width="2" height="1" fill="#555"/>
<rect x="4" y="5" width="9" height="7" fill="#ffffff"/>
<rect x="3" y="3" width="11" height="2" fill="#6f6f6f"/>
<rect x="3" y="3" width="1" height="10" fill="#6f6f6f"/>
<rect x="13" y="4" width="1" height="9" fill="#9a9a9a"/><rect x="4" y="12" width="10" height="1" fill="#9a9a9a"/>
<rect x="12" y="5" width="1" height="7" fill="#e0e0e0"/><rect x="12" y="6" width="1" height="2" fill="#6f6f6f"/>
<path d="M5 7V10.5L7.6 8.75Z" fill="#8a8a8a" shape-rendering="auto"/>
<rect x="8" y="6" width="2" height="1" fill="#8a8a8a"/><rect x="8" y="8" width="2" height="1" fill="#8a8a8a"/><rect x="8" y="10" width="2" height="1" fill="#8a8a8a"/>
</svg>
<div class="f" style="left:654px;top:448px;width:46px;height:17px;background:#fff"></div>
<div class="f" style="left:701px;top:448px;width:172px;height:17px;background:#fff"></div>
<svg class="r" style="left:876px;top:450px" width="16" height="16" viewBox="0 0 16 16" shape-rendering="crispEdges">
<rect x="0" y="0" width="16" height="16" fill="#c9c7c9"/>
<rect x="0" y="0" width="15" height="1" fill="#c4d0da"/><rect x="0" y="0" width="1" height="15" fill="#c4d0da"/>
<rect x="15" y="0" width="1" height="16" fill="#7d97b3"/><rect x="0" y="15" width="16" height="1" fill="#7d97b3"/>
<rect x="1" y="1" width="8" height="1" fill="#ffffff"/><rect x="9" y="1" width="1" height="1" fill="#555"/>
<rect x="1" y="1" width="1" height="8" fill="#ffffff"/><rect x="1" y="8" width="2" height="1" fill="#555"/>
<rect x="4" y="5" width="9" height="7" fill="#ffffff"/>
<rect x="3" y="3" width="11" height="2" fill="#6f6f6f"/>
<rect x="3" y="3" width="1" height="10" fill="#6f6f6f"/>
<rect x="13" y="4" width="1" height="9" fill="#9a9a9a"/><rect x="4" y="12" width="10" height="1" fill="#9a9a9a"/>
<rect x="12" y="5" width="1" height="7" fill="#e0e0e0"/><rect x="12" y="6" width="1" height="2" fill="#6f6f6f"/>
<path d="M5 7V10.5L7.6 8.75Z" fill="#8a8a8a" shape-rendering="auto"/>
<rect x="8" y="6" width="2" height="1" fill="#8a8a8a"/><rect x="8" y="8" width="2" height="1" fill="#8a8a8a"/><rect x="8" y="10" width="2" height="1" fill="#8a8a8a"/>
</svg>
<svg class="r" style="left:482px;top:452px" width="10" height="10" viewBox="0 0 10 10" shape-rendering="crispEdges"><rect x="3" y="1" width="4" height="1" fill="#e6e6e6"/><rect x="2" y="2" width="6" height="1" fill="#d0d0d0"/><rect x="1" y="3" width="8" height="4" fill="#d0d0d0"/><rect x="2" y="7" width="6" height="1" fill="#d0d0d0"/><rect x="3" y="8" width="4" height="1" fill="#d0d0d0"/><rect x="1" y="3" width="1" height="4" fill="#e6e6e6"/><rect x="3" y="0" width="4" height="1" fill="#1f2d40"/><rect x="1" y="1" width="2" height="1" fill="#1f2d40"/><rect x="1" y="2" width="1" height="1" fill="#1f2d40"/><rect x="0" y="3" width="1" height="4" fill="#1f2d40"/><rect x="7" y="1" width="1" height="1" fill="#5a7aa0"/><rect x="1" y="7" width="1" height="1" fill="#5a7aa0"/></svg>
<svg class="r" style="left:536px;top:452px" width="10" height="10" viewBox="0 0 10 10" shape-rendering="crispEdges"><rect x="3" y="1" width="4" height="1" fill="#e6e6e6"/><rect x="2" y="2" width="6" height="1" fill="#d0d0d0"/><rect x="1" y="3" width="8" height="4" fill="#d0d0d0"/><rect x="2" y="7" width="6" height="1" fill="#d0d0d0"/><rect x="3" y="8" width="4" height="1" fill="#d0d0d0"/><rect x="1" y="3" width="1" height="4" fill="#e6e6e6"/><rect x="3" y="0" width="4" height="1" fill="#1f2d40"/><rect x="1" y="1" width="2" height="1" fill="#1f2d40"/><rect x="1" y="2" width="1" height="1" fill="#1f2d40"/><rect x="0" y="3" width="1" height="4" fill="#1f2d40"/><rect x="7" y="1" width="1" height="1" fill="#5a7aa0"/><rect x="1" y="7" width="1" height="1" fill="#5a7aa0"/></svg>
<div class="r" style="left:607px;top:452px;width:9px;height:10px;background:#d0d0d0"></div>
<svg class="r" style="left:606px;top:451px" width="12" height="11" viewBox="0 0 12 11"><path d="M0.6 10V0.6H10" fill="none" stroke="#1f2d40" stroke-width="1.2"/></svg>
<div class="f" style="left:12px;top:466px;width:39px;height:18px;background:#fff"></div>
<div class="f" style="left:52px;top:466px;width:172px;height:18px;background:#fff"></div>
<svg class="r" style="left:227px;top:468px" width="16" height="16" viewBox="0 0 16 16" shape-rendering="crispEdges">
<rect x="0" y="0" width="16" height="16" fill="#c9c7c9"/>
<rect x="0" y="0" width="15" height="1" fill="#c4d0da"/><rect x="0" y="0" width="1" height="15" fill="#c4d0da"/>
<rect x="15" y="0" width="1" height="16" fill="#7d97b3"/><rect x="0" y="15" width="16" height="1" fill="#7d97b3"/>
<rect x="1" y="1" width="8" height="1" fill="#ffffff"/><rect x="9" y="1" width="1" height="1" fill="#555"/>
<rect x="1" y="1" width="1" height="8" fill="#ffffff"/><rect x="1" y="8" width="2" height="1" fill="#555"/>
<rect x="4" y="5" width="9" height="7" fill="#ffffff"/>
<rect x="3" y="3" width="11" height="2" fill="#6f6f6f"/>
<rect x="3" y="3" width="1" height="10" fill="#6f6f6f"/>
<rect x="13" y="4" width="1" height="9" fill="#9a9a9a"/><rect x="4" y="12" width="10" height="1" fill="#9a9a9a"/>
<rect x="12" y="5" width="1" height="7" fill="#e0e0e0"/><rect x="12" y="6" width="1" height="2" fill="#6f6f6f"/>
<path d="M5 7V10.5L7.6 8.75Z" fill="#8a8a8a" shape-rendering="auto"/>
<rect x="8" y="6" width="2" height="1" fill="#8a8a8a"/><rect x="8" y="8" width="2" height="1" fill="#8a8a8a"/><rect x="8" y="10" width="2" height="1" fill="#8a8a8a"/>
</svg>
<div class="f" style="left:245px;top:466px;width:38px;height:18px;background:#fff"></div>
<div class="f" style="left:285px;top:466px;width:171px;height:18px;background:#fff"></div>
<svg class="r" style="left:459px;top:468px" width="16" height="16" viewBox="0 0 16 16" shape-rendering="crispEdges">
<rect x="0" y="0" width="16" height="16" fill="#c9c7c9"/>
<rect x="0" y="0" width="15" height="1" fill="#c4d0da"/><rect x="0" y="0" width="1" height="15" fill="#c4d0da"/>
<rect x="15" y="0" width="1" height="16" fill="#7d97b3"/><rect x="0" y="15" width="16" height="1" fill="#7d97b3"/>
<rect x="1" y="1" width="8" height="1" fill="#ffffff"/><rect x="9" y="1" width="1" height="1" fill="#555"/>
<rect x="1" y="1" width="1" height="8" fill="#ffffff"/><rect x="1" y="8" width="2" height="1" fill="#555"/>
<rect x="4" y="5" width="9" height="7" fill="#ffffff"/>
<rect x="3" y="3" width="11" height="2" fill="#6f6f6f"/>
<rect x="3" y="3" width="1" height="10" fill="#6f6f6f"/>
<rect x="13" y="4" width="1" height="9" fill="#9a9a9a"/><rect x="4" y="12" width="10" height="1" fill="#9a9a9a"/>
<rect x="12" y="5" width="1" height="7" fill="#e0e0e0"/><rect x="12" y="6" width="1" height="2" fill="#6f6f6f"/>
<path d="M5 7V10.5L7.6 8.75Z" fill="#8a8a8a" shape-rendering="auto"/>
<rect x="8" y="6" width="2" height="1" fill="#8a8a8a"/><rect x="8" y="8" width="2" height="1" fill="#8a8a8a"/><rect x="8" y="10" width="2" height="1" fill="#8a8a8a"/>
</svg>
<div class="f" style="left:654px;top:466px;width:46px;height:18px;background:#fff"></div>
<div class="f" style="left:701px;top:466px;width:172px;height:18px;background:#fff"></div>
<svg class="r" style="left:876px;top:468px" width="16" height="16" viewBox="0 0 16 16" shape-rendering="crispEdges">
<rect x="0" y="0" width="16" height="16" fill="#c9c7c9"/>
<rect x="0" y="0" width="15" height="1" fill="#c4d0da"/><rect x="0" y="0" width="1" height="15" fill="#c4d0da"/>
<rect x="15" y="0" width="1" height="16" fill="#7d97b3"/><rect x="0" y="15" width="16" height="1" fill="#7d97b3"/>
<rect x="1" y="1" width="8" height="1" fill="#ffffff"/><rect x="9" y="1" width="1" height="1" fill="#555"/>
<rect x="1" y="1" width="1" height="8" fill="#ffffff"/><rect x="1" y="8" width="2" height="1" fill="#555"/>
<rect x="4" y="5" width="9" height="7" fill="#ffffff"/>
<rect x="3" y="3" width="11" height="2" fill="#6f6f6f"/>
<rect x="3" y="3" width="1" height="10" fill="#6f6f6f"/>
<rect x="13" y="4" width="1" height="9" fill="#9a9a9a"/><rect x="4" y="12" width="10" height="1" fill="#9a9a9a"/>
<rect x="12" y="5" width="1" height="7" fill="#e0e0e0"/><rect x="12" y="6" width="1" height="2" fill="#6f6f6f"/>
<path d="M5 7V10.5L7.6 8.75Z" fill="#8a8a8a" shape-rendering="auto"/>
<rect x="8" y="6" width="2" height="1" fill="#8a8a8a"/><rect x="8" y="8" width="2" height="1" fill="#8a8a8a"/><rect x="8" y="10" width="2" height="1" fill="#8a8a8a"/>
</svg>
<svg class="r" style="left:482px;top:470px" width="10" height="10" viewBox="0 0 10 10" shape-rendering="crispEdges"><rect x="3" y="1" width="4" height="1" fill="#e6e6e6"/><rect x="2" y="2" width="6" height="1" fill="#d0d0d0"/><rect x="1" y="3" width="8" height="4" fill="#d0d0d0"/><rect x="2" y="7" width="6" height="1" fill="#d0d0d0"/><rect x="3" y="8" width="4" height="1" fill="#d0d0d0"/><rect x="1" y="3" width="1" height="4" fill="#e6e6e6"/><rect x="3" y="0" width="4" height="1" fill="#1f2d40"/><rect x="1" y="1" width="2" height="1" fill="#1f2d40"/><rect x="1" y="2" width="1" height="1" fill="#1f2d40"/><rect x="0" y="3" width="1" height="4" fill="#1f2d40"/><rect x="7" y="1" width="1" height="1" fill="#5a7aa0"/><rect x="1" y="7" width="1" height="1" fill="#5a7aa0"/></svg>
<svg class="r" style="left:536px;top:470px" width="10" height="10" viewBox="0 0 10 10" shape-rendering="crispEdges"><rect x="3" y="1" width="4" height="1" fill="#e6e6e6"/><rect x="2" y="2" width="6" height="1" fill="#d0d0d0"/><rect x="1" y="3" width="8" height="4" fill="#d0d0d0"/><rect x="2" y="7" width="6" height="1" fill="#d0d0d0"/><rect x="3" y="8" width="4" height="1" fill="#d0d0d0"/><rect x="1" y="3" width="1" height="4" fill="#e6e6e6"/><rect x="3" y="0" width="4" height="1" fill="#1f2d40"/><rect x="1" y="1" width="2" height="1" fill="#1f2d40"/><rect x="1" y="2" width="1" height="1" fill="#1f2d40"/><rect x="0" y="3" width="1" height="4" fill="#1f2d40"/><rect x="7" y="1" width="1" height="1" fill="#5a7aa0"/><rect x="1" y="7" width="1" height="1" fill="#5a7aa0"/></svg>
<div class="r" style="left:607px;top:470px;width:9px;height:10px;background:#d0d0d0"></div>
<svg class="r" style="left:606px;top:469px" width="12" height="11" viewBox="0 0 12 11"><path d="M0.6 10V0.6H10" fill="none" stroke="#1f2d40" stroke-width="1.2"/></svg>
<div class="f" style="left:12px;top:485px;width:39px;height:18px;background:#fff"></div>
<div class="f" style="left:52px;top:485px;width:172px;height:18px;background:#fff"></div>
<svg class="r" style="left:227px;top:487px" width="16" height="16" viewBox="0 0 16 16" shape-rendering="crispEdges">
<rect x="0" y="0" width="16" height="16" fill="#c9c7c9"/>
<rect x="0" y="0" width="15" height="1" fill="#c4d0da"/><rect x="0" y="0" width="1" height="15" fill="#c4d0da"/>
<rect x="15" y="0" width="1" height="16" fill="#7d97b3"/><rect x="0" y="15" width="16" height="1" fill="#7d97b3"/>
<rect x="1" y="1" width="8" height="1" fill="#ffffff"/><rect x="9" y="1" width="1" height="1" fill="#555"/>
<rect x="1" y="1" width="1" height="8" fill="#ffffff"/><rect x="1" y="8" width="2" height="1" fill="#555"/>
<rect x="4" y="5" width="9" height="7" fill="#ffffff"/>
<rect x="3" y="3" width="11" height="2" fill="#6f6f6f"/>
<rect x="3" y="3" width="1" height="10" fill="#6f6f6f"/>
<rect x="13" y="4" width="1" height="9" fill="#9a9a9a"/><rect x="4" y="12" width="10" height="1" fill="#9a9a9a"/>
<rect x="12" y="5" width="1" height="7" fill="#e0e0e0"/><rect x="12" y="6" width="1" height="2" fill="#6f6f6f"/>
<path d="M5 7V10.5L7.6 8.75Z" fill="#8a8a8a" shape-rendering="auto"/>
<rect x="8" y="6" width="2" height="1" fill="#8a8a8a"/><rect x="8" y="8" width="2" height="1" fill="#8a8a8a"/><rect x="8" y="10" width="2" height="1" fill="#8a8a8a"/>
</svg>
<div class="f" style="left:245px;top:485px;width:38px;height:18px;background:#fff"></div>
<div class="f" style="left:285px;top:485px;width:171px;height:18px;background:#fff"></div>
<svg class="r" style="left:459px;top:487px" width="16" height="16" viewBox="0 0 16 16" shape-rendering="crispEdges">
<rect x="0" y="0" width="16" height="16" fill="#c9c7c9"/>
<rect x="0" y="0" width="15" height="1" fill="#c4d0da"/><rect x="0" y="0" width="1" height="15" fill="#c4d0da"/>
<rect x="15" y="0" width="1" height="16" fill="#7d97b3"/><rect x="0" y="15" width="16" height="1" fill="#7d97b3"/>
<rect x="1" y="1" width="8" height="1" fill="#ffffff"/><rect x="9" y="1" width="1" height="1" fill="#555"/>
<rect x="1" y="1" width="1" height="8" fill="#ffffff"/><rect x="1" y="8" width="2" height="1" fill="#555"/>
<rect x="4" y="5" width="9" height="7" fill="#ffffff"/>
<rect x="3" y="3" width="11" height="2" fill="#6f6f6f"/>
<rect x="3" y="3" width="1" height="10" fill="#6f6f6f"/>
<rect x="13" y="4" width="1" height="9" fill="#9a9a9a"/><rect x="4" y="12" width="10" height="1" fill="#9a9a9a"/>
<rect x="12" y="5" width="1" height="7" fill="#e0e0e0"/><rect x="12" y="6" width="1" height="2" fill="#6f6f6f"/>
<path d="M5 7V10.5L7.6 8.75Z" fill="#8a8a8a" shape-rendering="auto"/>
<rect x="8" y="6" width="2" height="1" fill="#8a8a8a"/><rect x="8" y="8" width="2" height="1" fill="#8a8a8a"/><rect x="8" y="10" width="2" height="1" fill="#8a8a8a"/>
</svg>
<div class="f" style="left:654px;top:485px;width:46px;height:18px;background:#fff"></div>
<div class="f" style="left:701px;top:485px;width:172px;height:18px;background:#fff"></div>
<svg class="r" style="left:876px;top:487px" width="16" height="16" viewBox="0 0 16 16" shape-rendering="crispEdges">
<rect x="0" y="0" width="16" height="16" fill="#c9c7c9"/>
<rect x="0" y="0" width="15" height="1" fill="#c4d0da"/><rect x="0" y="0" width="1" height="15" fill="#c4d0da"/>
<rect x="15" y="0" width="1" height="16" fill="#7d97b3"/><rect x="0" y="15" width="16" height="1" fill="#7d97b3"/>
<rect x="1" y="1" width="8" height="1" fill="#ffffff"/><rect x="9" y="1" width="1" height="1" fill="#555"/>
<rect x="1" y="1" width="1" height="8" fill="#ffffff"/><rect x="1" y="8" width="2" height="1" fill="#555"/>
<rect x="4" y="5" width="9" height="7" fill="#ffffff"/>
<rect x="3" y="3" width="11" height="2" fill="#6f6f6f"/>
<rect x="3" y="3" width="1" height="10" fill="#6f6f6f"/>
<rect x="13" y="4" width="1" height="9" fill="#9a9a9a"/><rect x="4" y="12" width="10" height="1" fill="#9a9a9a"/>
<rect x="12" y="5" width="1" height="7" fill="#e0e0e0"/><rect x="12" y="6" width="1" height="2" fill="#6f6f6f"/>
<path d="M5 7V10.5L7.6 8.75Z" fill="#8a8a8a" shape-rendering="auto"/>
<rect x="8" y="6" width="2" height="1" fill="#8a8a8a"/><rect x="8" y="8" width="2" height="1" fill="#8a8a8a"/><rect x="8" y="10" width="2" height="1" fill="#8a8a8a"/>
</svg>
<svg class="r" style="left:482px;top:489px" width="10" height="10" viewBox="0 0 10 10" shape-rendering="crispEdges"><rect x="3" y="1" width="4" height="1" fill="#e6e6e6"/><rect x="2" y="2" width="6" height="1" fill="#d0d0d0"/><rect x="1" y="3" width="8" height="4" fill="#d0d0d0"/><rect x="2" y="7" width="6" height="1" fill="#d0d0d0"/><rect x="3" y="8" width="4" height="1" fill="#d0d0d0"/><rect x="1" y="3" width="1" height="4" fill="#e6e6e6"/><rect x="3" y="0" width="4" height="1" fill="#1f2d40"/><rect x="1" y="1" width="2" height="1" fill="#1f2d40"/><rect x="1" y="2" width="1" height="1" fill="#1f2d40"/><rect x="0" y="3" width="1" height="4" fill="#1f2d40"/><rect x="7" y="1" width="1" height="1" fill="#5a7aa0"/><rect x="1" y="7" width="1" height="1" fill="#5a7aa0"/></svg>
<svg class="r" style="left:536px;top:489px" width="10" height="10" viewBox="0 0 10 10" shape-rendering="crispEdges"><rect x="3" y="1" width="4" height="1" fill="#e6e6e6"/><rect x="2" y="2" width="6" height="1" fill="#d0d0d0"/><rect x="1" y="3" width="8" height="4" fill="#d0d0d0"/><rect x="2" y="7" width="6" height="1" fill="#d0d0d0"/><rect x="3" y="8" width="4" height="1" fill="#d0d0d0"/><rect x="1" y="3" width="1" height="4" fill="#e6e6e6"/><rect x="3" y="0" width="4" height="1" fill="#1f2d40"/><rect x="1" y="1" width="2" height="1" fill="#1f2d40"/><rect x="1" y="2" width="1" height="1" fill="#1f2d40"/><rect x="0" y="3" width="1" height="4" fill="#1f2d40"/><rect x="7" y="1" width="1" height="1" fill="#5a7aa0"/><rect x="1" y="7" width="1" height="1" fill="#5a7aa0"/></svg>
<div class="r" style="left:607px;top:489px;width:9px;height:10px;background:#d0d0d0"></div>
<svg class="r" style="left:606px;top:488px" width="12" height="11" viewBox="0 0 12 11"><path d="M0.6 10V0.6H10" fill="none" stroke="#1f2d40" stroke-width="1.2"/></svg>
<svg class="r" style="left:893px;top:354px" width="15" height="150" viewBox="0 0 15 150"><g shape-rendering="crispEdges"><rect x="5" y="2" width="5" height="1" fill="#d0d0d0"/><rect x="3" y="3" width="9" height="1" fill="#d0d0d0"/><rect x="3" y="4" width="9" height="1" fill="#d0d0d0"/><rect x="2" y="5" width="12" height="9" fill="#d0d0d0"/><rect x="5" y="0" width="5" height="1" fill="#8ca5bf"/><rect x="3" y="1" width="2" height="1" fill="#8ca5bf"/><rect x="10" y="1" width="2" height="1" fill="#8ca5bf"/><rect x="2" y="2" width="1" height="1" fill="#8ca5bf"/><rect x="12" y="2" width="1" height="1" fill="#8ca5bf"/><rect x="1" y="3" width="1" height="1" fill="#8ca5bf"/><rect x="13" y="3" width="1" height="1" fill="#8ca5bf"/><rect x="1" y="4" width="1" height="1" fill="#8ca5bf"/><rect x="13" y="4" width="1" height="1" fill="#8ca5bf"/><rect x="5" y="1" width="5" height="1" fill="#fff"/><rect x="3" y="2" width="2" height="1" fill="#fff"/><rect x="10" y="2" width="2" height="1" fill="#fff"/><rect x="2" y="3" width="1" height="1" fill="#fff"/><rect x="12" y="3" width="1" height="1" fill="#fff"/><rect x="2" y="4" width="1" height="1" fill="#fff"/><rect x="12" y="4" width="1" height="1" fill="#fff"/><rect x="0" y="5" width="1" height="10" fill="#8ca5bf"/><rect x="14" y="5" width="1" height="10" fill="#8ca5bf"/><rect x="1" y="5" width="1" height="9" fill="#fff"/><rect x="2" y="14" width="13" height="1" fill="#5a7898"/><rect x="2" y="15" width="12" height="1" fill="#fff"/><rect x="0" y="15" width="1" height="120" fill="#a3a3a3"/><rect x="14" y="16" width="1" height="119" fill="#a3a3a3"/><rect x="1" y="15" width="1" height="120" fill="#fff"/><rect x="2" y="16" width="12" height="119" fill="#d0d0d0"/><rect x="2" y="134" width="13" height="1" fill="#5a7898"/><rect x="2" y="135" width="12" height="1" fill="#fff"/><rect x="2" y="136" width="12" height="9" fill="#d0d0d0"/><rect x="0" y="135" width="1" height="10" fill="#8ca5bf"/><rect x="14" y="134" width="1" height="11" fill="#8ca5bf"/><rect x="1" y="136" width="1" height="9" fill="#fff"/><rect x="5" y="147" width="5" height="1" fill="#d0d0d0"/><rect x="3" y="146" width="9" height="1" fill="#d0d0d0"/><rect x="3" y="145" width="9" height="1" fill="#d0d0d0"/><rect x="5" y="149" width="5" height="1" fill="#8ca5bf"/><rect x="3" y="148" width="2" height="1" fill="#8ca5bf"/><rect x="10" y="148" width="2" height="1" fill="#8ca5bf"/><rect x="2" y="147" width="1" height="1" fill="#8ca5bf"/><rect x="12" y="147" width="1" height="1" fill="#8ca5bf"/><rect x="1" y="146" width="1" height="1" fill="#8ca5bf"/><rect x="13" y="146" width="1" height="1" fill="#8ca5bf"/><rect x="1" y="145" width="1" height="1" fill="#8ca5bf"/><rect x="13" y="145" width="1" height="1" fill="#8ca5bf"/><rect x="5" y="148" width="5" height="1" fill="#fff"/><rect x="3" y="147" width="2" height="1" fill="#fff"/><rect x="10" y="147" width="2" height="1" fill="#fff"/><rect x="2" y="146" width="1" height="1" fill="#fff"/><rect x="12" y="146" width="1" height="1" fill="#fff"/><rect x="2" y="145" width="1" height="1" fill="#fff"/><rect x="12" y="145" width="1" height="1" fill="#fff"/><rect x="9" y="54" width="2" height="1" fill="#fff"/><rect x="9" y="55" width="1" height="1" fill="#fff"/><rect x="10" y="55" width="1" height="1" fill="#b0bccb"/><rect x="11" y="55" width="1" height="1" fill="#7893b0"/><rect x="10" y="56" width="1" height="1" fill="#7893b0"/><rect x="4" y="58" width="2" height="1" fill="#fff"/><rect x="4" y="59" width="1" height="1" fill="#fff"/><rect x="5" y="59" width="1" height="1" fill="#b0bccb"/><rect x="6" y="59" width="1" height="1" fill="#7893b0"/><rect x="5" y="60" width="1" height="1" fill="#7893b0"/><rect x="9" y="62" width="2" height="1" fill="#fff"/><rect x="9" y="63" width="1" height="1" fill="#fff"/><rect x="10" y="63" width="1" height="1" fill="#b0bccb"/><rect x="11" y="63" width="1" height="1" fill="#7893b0"/><rect x="10" y="64" width="1" height="1" fill="#7893b0"/><rect x="4" y="66" width="2" height="1" fill="#fff"/><rect x="4" y="67" width="1" height="1" fill="#fff"/><rect x="5" y="67" width="1" height="1" fill="#b0bccb"/><rect x="6" y="67" width="1" height="1" fill="#7893b0"/><rect x="5" y="68" width="1" height="1" fill="#7893b0"/><rect x="9" y="70" width="2" height="1" fill="#fff"/><rect x="9" y="71" width="1" height="1" fill="#fff"/><rect x="10" y="71" width="1" height="1" fill="#b0bccb"/><rect x="11" y="71" width="1" height="1" fill="#7893b0"/><rect x="10" y="72" width="1" height="1" fill="#7893b0"/><rect x="4" y="74" width="2" height="1" fill="#fff"/><rect x="4" y="75" width="1" height="1" fill="#fff"/><rect x="5" y="75" width="1" height="1" fill="#b0bccb"/><rect x="6" y="75" width="1" height="1" fill="#7893b0"/><rect x="5" y="76" width="1" height="1" fill="#7893b0"/><rect x="9" y="78" width="2" height="1" fill="#fff"/><rect x="9" y="79" width="1" height="1" fill="#fff"/><rect x="10" y="79" width="1" height="1" fill="#b0bccb"/><rect x="11" y="79" width="1" height="1" fill="#7893b0"/><rect x="10" y="80" width="1" height="1" fill="#7893b0"/><rect x="4" y="82" width="2" height="1" fill="#fff"/><rect x="4" y="83" width="1" height="1" fill="#fff"/><rect x="5" y="83" width="1" height="1" fill="#b0bccb"/><rect x="6" y="83" width="1" height="1" fill="#7893b0"/><rect x="5" y="84" width="1" height="1" fill="#7893b0"/><rect x="9" y="86" width="2" height="1" fill="#fff"/><rect x="9" y="87" width="1" height="1" fill="#fff"/><rect x="10" y="87" width="1" height="1" fill="#b0bccb"/><rect x="11" y="87" width="1" height="1" fill="#7893b0"/><rect x="10" y="88" width="1" height="1" fill="#7893b0"/></g><path d="M4 10H11.2L7.6 6Z" fill="#5a7090"/><path d="M4 140H11.2L7.6 144Z" fill="#5a7090"/></svg>
<div class="rb" style="left:13px;top:513px;width:641px;height:37px"></div>
<div class="t" style="left:22px;top:526px;font-size:11px;color:#000;letter-spacing:0.15px">Erfassung</div>
<div class="f" style="left:80px;top:524px;width:119px;height:17px;background:#eeeaee"></div>
<div class="t" style="left:83px;top:528px;font-size:11px;color:#000;letter-spacing:-0.11px">04.06.2021 10:00</div>
<div class="f" style="left:200px;top:524px;width:132px;height:17px;background:#eeeaee"></div>
<div class="t" style="left:202px;top:528px;font-size:11px;color:#000;letter-spacing:-0.55px">REFLEX</div>
<div class="t" style="left:337px;top:526px;font-size:11px;color:#000;">Änderung</div>
<div class="f" style="left:392px;top:524px;width:119px;height:17px;background:#eeeaee"></div>
<div class="f" style="left:512px;top:524px;width:132px;height:17px;background:#eeeaee"></div>
<div class="hl" style="left:6px;top:199px;width:381px;height:23px"></div>
<div class="hl" style="left:8px;top:348px;width:901px;height:27px"></div>
</body></html>
